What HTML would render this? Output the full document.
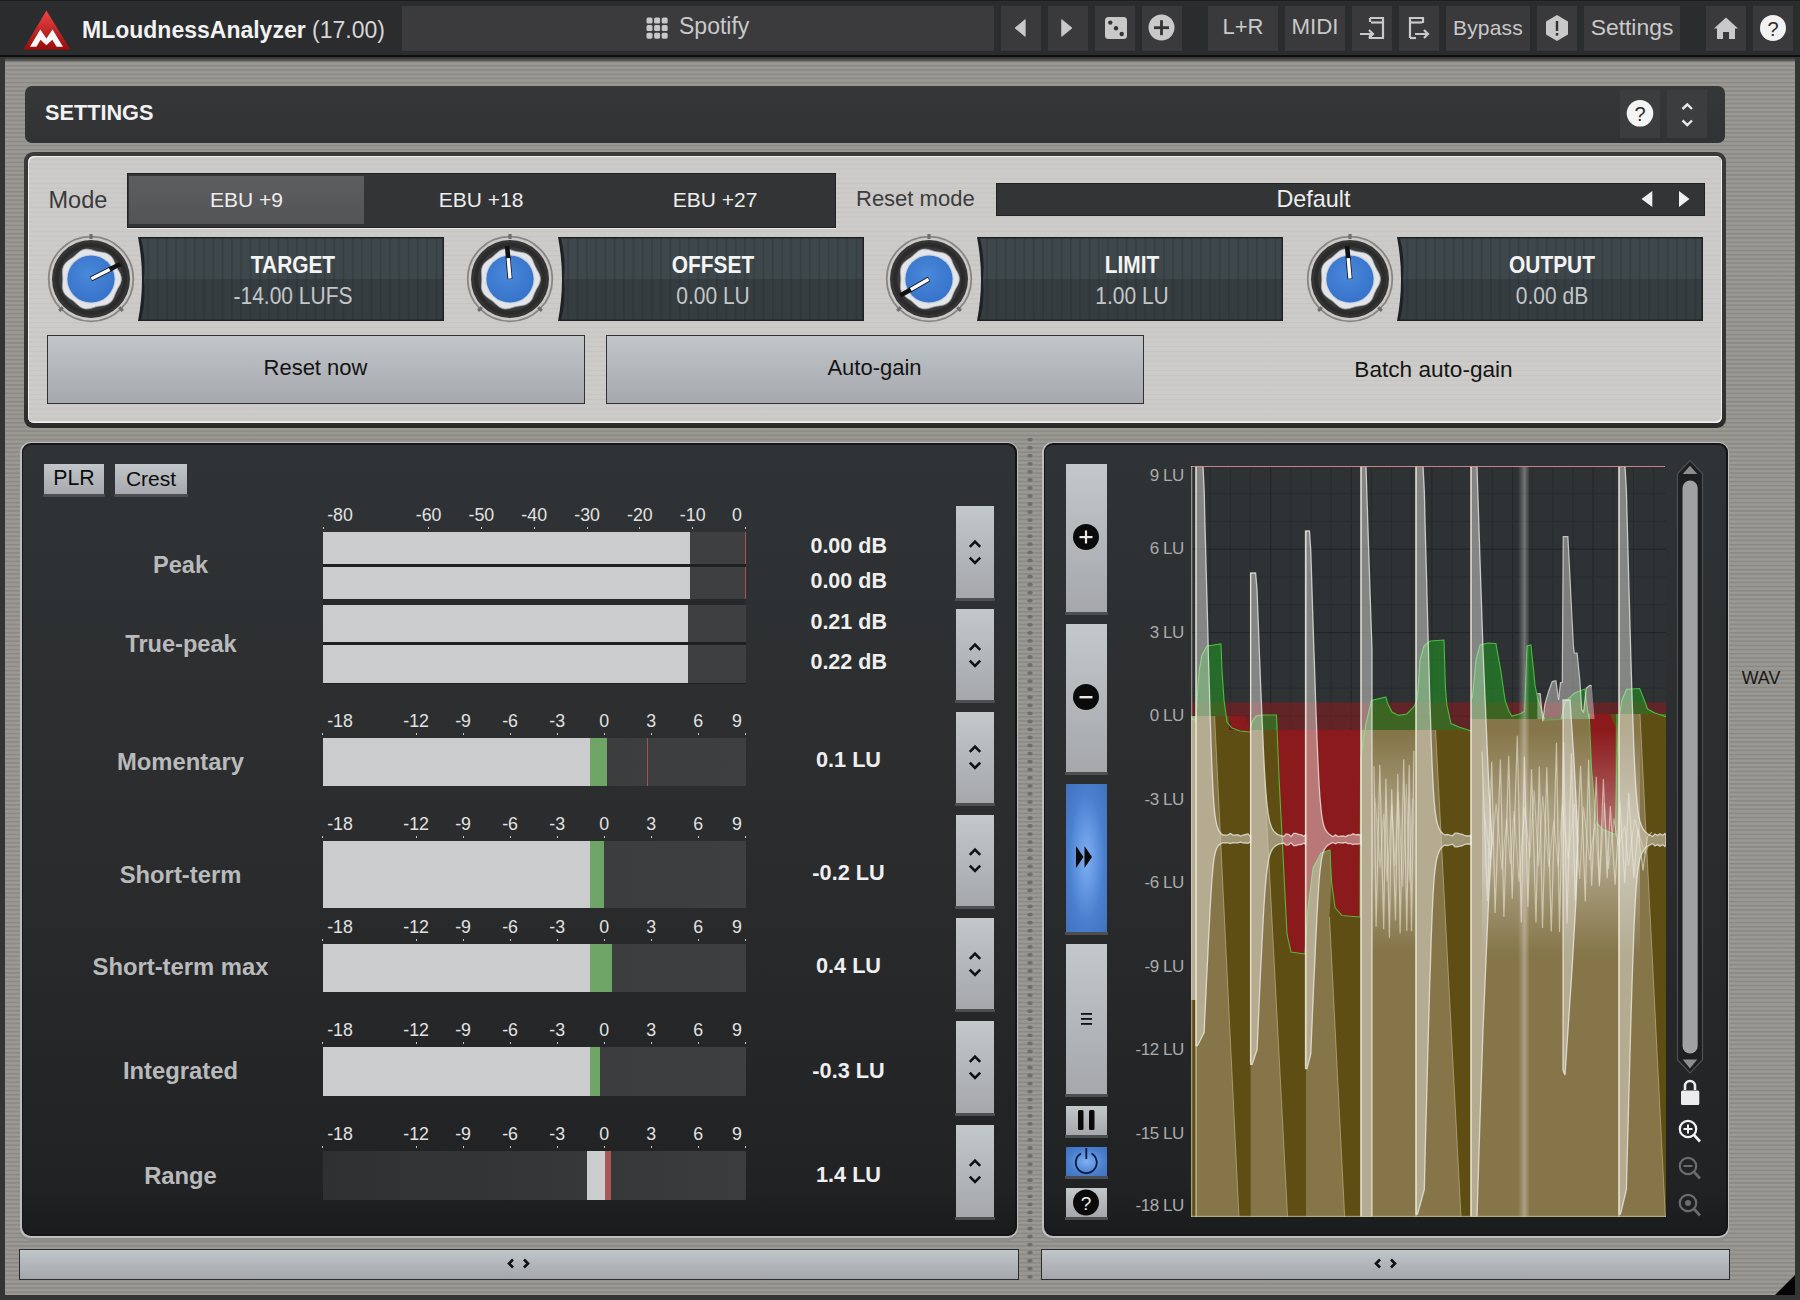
<!DOCTYPE html><html><head><meta charset="utf-8"><style>html,body{margin:0;padding:0;width:1800px;height:1300px;overflow:hidden;}body{position:relative;font-family:"Liberation Sans", sans-serif;background:#939190;}</style></head><body>
<div style="position:absolute;left:0px;top:0px;width:1800px;height:1300px;background:repeating-linear-gradient(180deg,#9b9994 0px,#9a9893 1.6px,#8a8984 2.4px,#8c8b86 3.2px,#9b9994 4.2px);"></div>
<div style="position:absolute;left:0px;top:0px;width:5px;height:1300px;background:#343434;"></div>
<div style="position:absolute;left:1795px;top:0px;width:5px;height:1300px;background:#343434;"></div>
<div style="position:absolute;left:0px;top:1295px;width:1800px;height:5px;background:#343434;"></div>
<div style="position:absolute;left:5px;top:57px;width:1790px;height:5px;background:linear-gradient(#2e2e2e,#5a5957 70%,#8f8d89);"></div>
<div style="position:absolute;left:0px;top:0px;width:1800px;height:57px;background:#2b2c2e;border-top:1px solid #1c1d1d;box-sizing:border-box;"></div>
<div style="position:absolute;left:0px;top:55px;width:1800px;height:2px;background:#0e0f0f;"></div>
<svg style="position:absolute;left:0;top:0" width="80" height="57"><defs><linearGradient id="lg" x1="0" y1="0" x2="0" y2="1"><stop offset="0" stop-color="#ee4444"/><stop offset="1" stop-color="#960d0d"/></linearGradient></defs><polygon points="46.4,10.5 70.5,49.8 23.2,49.8" fill="url(#lg)"/><polygon points="30,46.8 40.3,29.5 46.4,38.6 52.5,29.5 63,46.8 56.6,46.8 52.3,39.8 46.4,45.3 40.5,39.8 36.4,46.8" fill="#fafafa"/></svg>
<div style="position:absolute;left:82.0px;top:17.1px;line-height:27.6px;font-size:23px;font-weight:700;color:#f2f2f2;white-space:nowrap;">MLoudnessAnalyzer</div>
<div style="position:absolute;left:312.0px;top:17.1px;line-height:27.6px;font-size:23px;font-weight:400;color:#d6d6d6;white-space:nowrap;">(17.00)</div>
<div style="position:absolute;left:402px;top:6px;width:592px;height:45px;background:#3b3b3d;"></div>
<svg style="position:absolute;left:646px;top:17px" width="24" height="23"><rect x="0.5" y="0.5" width="6" height="6" rx="1.6" fill="#c9c9c9"/><rect x="0.5" y="8.1" width="6" height="6" rx="1.6" fill="#c9c9c9"/><rect x="0.5" y="15.7" width="6" height="6" rx="1.6" fill="#c9c9c9"/><rect x="8.1" y="0.5" width="6" height="6" rx="1.6" fill="#c9c9c9"/><rect x="8.1" y="8.1" width="6" height="6" rx="1.6" fill="#c9c9c9"/><rect x="8.1" y="15.7" width="6" height="6" rx="1.6" fill="#c9c9c9"/><rect x="15.7" y="0.5" width="6" height="6" rx="1.6" fill="#c9c9c9"/><rect x="15.7" y="8.1" width="6" height="6" rx="1.6" fill="#c9c9c9"/><rect x="15.7" y="15.7" width="6" height="6" rx="1.6" fill="#c9c9c9"/></svg>
<div style="position:absolute;left:679.0px;top:13.4px;line-height:27.6px;font-size:23px;font-weight:400;color:#c9c9c9;white-space:nowrap;">Spotify</div>
<div style="position:absolute;left:1001px;top:6px;width:40px;height:45px;background:#3a3a3c;"></div>
<div style="position:absolute;left:1048px;top:6px;width:40px;height:45px;background:#3a3a3c;"></div>
<div style="position:absolute;left:1095px;top:6px;width:40px;height:45px;background:#3a3a3c;"></div>
<div style="position:absolute;left:1142px;top:6px;width:40px;height:45px;background:#3a3a3c;"></div>
<svg style="position:absolute;left:1001px;top:6px" width="181" height="45"><polygon points="14,22 24.2,13.6 24.2,30.4" fill="#c9c9c9" stroke="#c9c9c9" stroke-width="0.8" stroke-linejoin="round"/><polygon points="60.7,13.6 71,22 60.7,30.4" fill="#c9c9c9" stroke="#c9c9c9" stroke-width="0.8" stroke-linejoin="round"/><rect x="104" y="11" width="22" height="22" rx="3.5" fill="#c9c9c9"/><circle cx="109.3" cy="16.6" r="2.2" fill="#333"/><circle cx="115" cy="22.3" r="2.2" fill="#333"/><circle cx="120.7" cy="28" r="2.2" fill="#333"/><circle cx="160.5" cy="21.5" r="13" fill="#c9c9c9"/><rect x="153" y="20.3" width="15" height="2.8" fill="#333"/><rect x="159.1" y="14.2" width="2.8" height="15" fill="#333"/></svg>
<div style="position:absolute;left:1208px;top:6px;width:70px;height:45px;background:#3a3a3c;"></div>
<div style="position:absolute;left:1208.0px;top:14.2px;width:70px;text-align:center;line-height:26.4px;font-size:22px;font-weight:400;color:#c9c9c9;white-space:nowrap;">L+R</div>
<div style="position:absolute;left:1285px;top:6px;width:60px;height:45px;background:#3a3a3c;"></div>
<div style="position:absolute;left:1285.0px;top:14.0px;width:60px;text-align:center;line-height:26.8px;font-size:22.3px;font-weight:400;color:#c9c9c9;white-space:nowrap;">MIDI</div>
<div style="position:absolute;left:1352px;top:6px;width:40px;height:45px;background:#3a3a3c;"></div>
<div style="position:absolute;left:1399px;top:6px;width:40px;height:45px;background:#3a3a3c;"></div>
<svg style="position:absolute;left:1352px;top:6px" width="87" height="45" fill="none" stroke="#c9c9c9" stroke-width="2.2"><path d="M18,12 H31 V32 H18 V28"/><path d="M18,12 V16"/><path d="M19,16.5 H30"/><path d="M8,28 H21 M17,24 L21,28 L17,32"/><path d="M58,32 V12 H71 V17" transform="translate(0,0)"/><path d="M59,16.5 H70"/><path d="M58,32 H64"/><path d="M63,28 H76 M72,24 L76,28 L72,32"/></svg>
<div style="position:absolute;left:1446px;top:6px;width:84px;height:45px;background:#3a3a3c;"></div>
<div style="position:absolute;left:1446.0px;top:14.8px;width:84px;text-align:center;line-height:25.2px;font-size:21px;font-weight:400;color:#c9c9c9;white-space:nowrap;letter-spacing:0.2px;">Bypass</div>
<div style="position:absolute;left:1537px;top:6px;width:40px;height:45px;background:#3a3a3c;"></div>
<svg style="position:absolute;left:1537px;top:6px" width="40" height="45"><polygon points="20,9 31,15.5 31,28.5 20,35 9,28.5 9,15.5" fill="#c9c9c9"/><rect x="18.8" y="15" width="2.4" height="10" fill="#333"/><rect x="18.8" y="27" width="2.4" height="2.6" fill="#333"/></svg>
<div style="position:absolute;left:1584px;top:6px;width:96px;height:45px;background:#3a3a3c;"></div>
<div style="position:absolute;left:1584.0px;top:13.7px;width:96px;text-align:center;line-height:27.5px;font-size:22.9px;font-weight:400;color:#c9c9c9;white-space:nowrap;">Settings</div>
<div style="position:absolute;left:1706px;top:6px;width:40px;height:45px;background:#3a3a3c;"></div>
<div style="position:absolute;left:1753px;top:6px;width:40px;height:45px;background:#3a3a3c;"></div>
<svg style="position:absolute;left:1706px;top:6px" width="87" height="45"><polygon points="20,11.5 32,22.5 29,22.5 29,33 23,33 23,26 17,26 17,33 11,33 11,22.5 8,22.5" fill="#c9c9c9"/><circle cx="67" cy="22" r="13" fill="#f2f2f2"/><text x="67" y="29.5" text-anchor="middle" font-family="Liberation Sans" font-size="20" fill="#2b2b2b">?</text></svg>
<div style="position:absolute;left:25px;top:86px;width:1700px;height:57px;background:linear-gradient(#353738,#303233);border-radius:7px;"></div>
<div style="position:absolute;left:45.0px;top:100.3px;line-height:26.0px;font-size:21.7px;font-weight:700;color:#f2f2f2;white-space:nowrap;">SETTINGS</div>
<div style="position:absolute;left:1620px;top:90px;width:40px;height:48px;background:#3b3d3e;"></div>
<div style="position:absolute;left:1667px;top:90px;width:40px;height:48px;background:#3b3d3e;"></div>
<svg style="position:absolute;left:1620px;top:90px" width="87" height="48"><circle cx="20" cy="23.3" r="13.3" fill="#f4f4f4"/><text x="20" y="30.5" text-anchor="middle" font-family="Liberation Sans" font-size="20" fill="#2b2b2b">?</text><path d="M62.5,19 L67.3,14.5 L72,19" fill="none" stroke="#e8e8e8" stroke-width="2.4"/><path d="M62.5,30.5 L67.3,35 L72,30.5" fill="none" stroke="#e8e8e8" stroke-width="2.4"/></svg>
<div style="position:absolute;left:24px;top:152px;width:1702px;height:276px;background:linear-gradient(#3a3a3a,#333 90%,#2a2a2a);border-radius:9px;"></div>
<div style="position:absolute;left:28px;top:156px;width:1694px;height:267px;background:repeating-linear-gradient(180deg,#cecccb 0px,#cdcbc8 2.5px,#c6c5c2 3.5px,#cecccb 4.8px);border-radius:6px;box-shadow:inset 1px 1px 0 #f0f0f0,inset -1px -1.5px 0 #f2f2f2;"></div>
<div style="position:absolute;left:48.5px;top:185.9px;line-height:28.2px;font-size:23.5px;font-weight:400;color:#3a3a3a;white-space:nowrap;">Mode</div>
<div style="position:absolute;left:127px;top:173px;width:709px;height:55px;background:#333435;border:1px solid #222;box-sizing:border-box;box-shadow:0 1px 0 #e8e8e8;"></div>
<div style="position:absolute;left:129px;top:176px;width:235px;height:48px;background:linear-gradient(#5d5e5f,#535455);"></div>
<div style="position:absolute;left:146.5px;top:186.8px;width:200px;text-align:center;line-height:25.2px;font-size:21px;font-weight:400;color:#eeeeee;white-space:nowrap;">EBU +9</div>
<div style="position:absolute;left:381.0px;top:186.8px;width:200px;text-align:center;line-height:25.2px;font-size:21px;font-weight:400;color:#eeeeee;white-space:nowrap;">EBU +18</div>
<div style="position:absolute;left:615.0px;top:186.8px;width:200px;text-align:center;line-height:25.2px;font-size:21px;font-weight:400;color:#eeeeee;white-space:nowrap;">EBU +27</div>
<div style="position:absolute;left:856.0px;top:186.2px;line-height:26.4px;font-size:22px;font-weight:400;color:#3c3c3c;white-space:nowrap;">Reset mode</div>
<div style="position:absolute;left:996px;top:183px;width:709px;height:33px;background:#333435;border:1px solid #222;box-sizing:border-box;"></div>
<div style="position:absolute;left:1213.5px;top:185.4px;width:200px;text-align:center;line-height:28.1px;font-size:23.4px;font-weight:400;color:#eeeeee;white-space:nowrap;">Default</div>
<svg style="position:absolute;left:1636px;top:186px" width="60" height="26"><polygon points="5.5,13 16.3,5 16.3,21" fill="#f0f0f0"/><polygon points="43,5 53.5,13 43,21" fill="#f0f0f0"/></svg>
<svg style="position:absolute;left:138px;top:237px" width="306" height="84"><defs><pattern id="vs" width="9.3" height="84" patternUnits="userSpaceOnUse"><rect width="9.3" height="84" fill="#000" fill-opacity="0"/><rect x="0" width="1.6" height="84" fill="#000" fill-opacity="0.12"/></pattern></defs><path d="M0,0 H306 V84 H0 Q8,42 0,0 Z" fill="#1e2225"/><path d="M3,1.5 H304.5 V42 H6 Q8,20 3,1.5 Z" fill="#3e474b"/><path d="M6,42 H304.5 V82.5 H3 Q8,64 6,42 Z" fill="#363d41"/><rect x="3" y="1.5" width="301.5" height="81" fill="url(#vs)"/></svg>
<div style="position:absolute;left:143.0px;top:251.7px;width:300px;text-align:center;line-height:27.8px;font-size:23.2px;font-weight:700;color:#f4f4f4;white-space:nowrap;transform:scaleX(0.9);">TARGET</div>
<div style="position:absolute;left:143.0px;top:282.7px;width:300px;text-align:center;line-height:27.8px;font-size:23.2px;font-weight:400;color:#c3c7c9;white-space:nowrap;transform:scaleX(0.905);">-14.00 LUFS</div>
<svg style="position:absolute;left:44.8px;top:232.5px" width="92" height="92"><defs><radialGradient id="kb" cx="0.45" cy="0.4" r="0.7"><stop offset="0" stop-color="#4a88da"/><stop offset="1" stop-color="#3370c8"/></radialGradient></defs><circle cx="46" cy="46" r="42.3" fill="none" stroke="#878684" stroke-width="1.8"/><line x1="46.0" y1="6.0" x2="46.0" y2="1.0" stroke="#6f6e6c" stroke-width="3.2"/><line x1="74.3" y1="74.3" x2="77.8" y2="77.8" stroke="#6f6e6c" stroke-width="3.2"/><line x1="17.7" y1="74.3" x2="14.2" y2="77.8" stroke="#6f6e6c" stroke-width="3.2"/><circle cx="46" cy="46" r="39" fill="#353536"/><circle cx="46" cy="46" r="36" fill="#2b2b2c"/><circle cx="46" cy="46" r="32" fill="#3a3a3b"/><polygon points="76.4,46.0 76.1,48.6 75.2,51.2 74.0,53.5 72.7,55.7 71.6,57.9 70.5,60.2 69.6,62.5 68.6,65.0 67.3,67.3 65.5,69.3 63.4,70.8 60.9,71.9 58.3,72.5 55.8,72.9 53.3,73.3 50.9,73.8 48.5,74.6 46.0,75.3 43.4,75.8 40.7,75.9 38.1,75.3 35.7,74.2 33.6,72.6 31.6,70.9 29.8,69.2 27.9,67.6 25.8,66.2 23.7,64.7 21.6,63.1 19.8,61.1 18.5,58.8 17.7,56.3 17.4,53.7 17.5,51.0 17.7,48.5 17.8,46.0 17.7,43.5 17.5,41.0 17.4,38.3 17.7,35.7 18.5,33.2 19.8,30.9 21.6,28.9 23.7,27.3 25.8,25.8 27.9,24.4 29.8,22.8 31.6,21.1 33.6,19.4 35.7,17.8 38.1,16.7 40.7,16.1 43.4,16.2 46.0,16.7 48.5,17.4 50.9,18.2 53.3,18.7 55.8,19.1 58.3,19.5 60.9,20.1 63.4,21.2 65.5,22.7 67.3,24.7 68.6,27.0 69.6,29.5 70.5,31.8 71.6,34.1 72.7,36.3 74.0,38.5 75.2,40.8 76.1,43.4" fill="#e4e5e8" stroke="#a6a7ab" stroke-width="0.8"/><circle cx="46" cy="46" r="24.6" fill="#c9d2df"/><circle cx="46" cy="46" r="23.6" fill="url(#kb)"/><line x1="46" y1="46" x2="65.6" y2="36.0" stroke="#141414" stroke-width="5"/><line x1="63.8" y1="36.9" x2="75.4" y2="31.0" stroke="#111" stroke-width="4.6"/><line x1="46.4" y1="45.8" x2="64.7" y2="36.5" stroke="#fafafa" stroke-width="3.4"/></svg>
<svg style="position:absolute;left:557.5px;top:237px" width="306" height="84"><defs><pattern id="vs" width="9.3" height="84" patternUnits="userSpaceOnUse"><rect width="9.3" height="84" fill="#000" fill-opacity="0"/><rect x="0" width="1.6" height="84" fill="#000" fill-opacity="0.12"/></pattern></defs><path d="M0,0 H306 V84 H0 Q8,42 0,0 Z" fill="#1e2225"/><path d="M3,1.5 H304.5 V42 H6 Q8,20 3,1.5 Z" fill="#3e474b"/><path d="M6,42 H304.5 V82.5 H3 Q8,64 6,42 Z" fill="#363d41"/><rect x="3" y="1.5" width="301.5" height="81" fill="url(#vs)"/></svg>
<div style="position:absolute;left:562.5px;top:251.7px;width:300px;text-align:center;line-height:27.8px;font-size:23.2px;font-weight:700;color:#f4f4f4;white-space:nowrap;transform:scaleX(0.9);">OFFSET</div>
<div style="position:absolute;left:562.5px;top:282.7px;width:300px;text-align:center;line-height:27.8px;font-size:23.2px;font-weight:400;color:#c3c7c9;white-space:nowrap;transform:scaleX(0.905);">0.00 LU</div>
<svg style="position:absolute;left:464.0px;top:232.5px" width="92" height="92"><defs><radialGradient id="kb" cx="0.45" cy="0.4" r="0.7"><stop offset="0" stop-color="#4a88da"/><stop offset="1" stop-color="#3370c8"/></radialGradient></defs><circle cx="46" cy="46" r="42.3" fill="none" stroke="#878684" stroke-width="1.8"/><line x1="46.0" y1="6.0" x2="46.0" y2="1.0" stroke="#6f6e6c" stroke-width="3.2"/><line x1="74.3" y1="74.3" x2="77.8" y2="77.8" stroke="#6f6e6c" stroke-width="3.2"/><line x1="17.7" y1="74.3" x2="14.2" y2="77.8" stroke="#6f6e6c" stroke-width="3.2"/><circle cx="46" cy="46" r="39" fill="#353536"/><circle cx="46" cy="46" r="36" fill="#2b2b2c"/><circle cx="46" cy="46" r="32" fill="#3a3a3b"/><polygon points="76.4,46.0 76.1,48.6 75.2,51.2 74.0,53.5 72.7,55.7 71.6,57.9 70.5,60.2 69.6,62.5 68.6,65.0 67.3,67.3 65.5,69.3 63.4,70.8 60.9,71.9 58.3,72.5 55.8,72.9 53.3,73.3 50.9,73.8 48.5,74.6 46.0,75.3 43.4,75.8 40.7,75.9 38.1,75.3 35.7,74.2 33.6,72.6 31.6,70.9 29.8,69.2 27.9,67.6 25.8,66.2 23.7,64.7 21.6,63.1 19.8,61.1 18.5,58.8 17.7,56.3 17.4,53.7 17.5,51.0 17.7,48.5 17.8,46.0 17.7,43.5 17.5,41.0 17.4,38.3 17.7,35.7 18.5,33.2 19.8,30.9 21.6,28.9 23.7,27.3 25.8,25.8 27.9,24.4 29.8,22.8 31.6,21.1 33.6,19.4 35.7,17.8 38.1,16.7 40.7,16.1 43.4,16.2 46.0,16.7 48.5,17.4 50.9,18.2 53.3,18.7 55.8,19.1 58.3,19.5 60.9,20.1 63.4,21.2 65.5,22.7 67.3,24.7 68.6,27.0 69.6,29.5 70.5,31.8 71.6,34.1 72.7,36.3 74.0,38.5 75.2,40.8 76.1,43.4" fill="#e4e5e8" stroke="#a6a7ab" stroke-width="0.8"/><circle cx="46" cy="46" r="24.6" fill="#c9d2df"/><circle cx="46" cy="46" r="23.6" fill="url(#kb)"/><line x1="46" y1="46" x2="44.1" y2="24.1" stroke="#141414" stroke-width="5"/><line x1="44.3" y1="26.1" x2="43.1" y2="13.1" stroke="#111" stroke-width="4.6"/><line x1="46.0" y1="45.5" x2="44.2" y2="25.1" stroke="#fafafa" stroke-width="3.4"/></svg>
<svg style="position:absolute;left:977px;top:237px" width="306" height="84"><defs><pattern id="vs" width="9.3" height="84" patternUnits="userSpaceOnUse"><rect width="9.3" height="84" fill="#000" fill-opacity="0"/><rect x="0" width="1.6" height="84" fill="#000" fill-opacity="0.12"/></pattern></defs><path d="M0,0 H306 V84 H0 Q8,42 0,0 Z" fill="#1e2225"/><path d="M3,1.5 H304.5 V42 H6 Q8,20 3,1.5 Z" fill="#3e474b"/><path d="M6,42 H304.5 V82.5 H3 Q8,64 6,42 Z" fill="#363d41"/><rect x="3" y="1.5" width="301.5" height="81" fill="url(#vs)"/></svg>
<div style="position:absolute;left:982.0px;top:251.7px;width:300px;text-align:center;line-height:27.8px;font-size:23.2px;font-weight:700;color:#f4f4f4;white-space:nowrap;transform:scaleX(0.9);">LIMIT</div>
<div style="position:absolute;left:982.0px;top:282.7px;width:300px;text-align:center;line-height:27.8px;font-size:23.2px;font-weight:400;color:#c3c7c9;white-space:nowrap;transform:scaleX(0.905);">1.00 LU</div>
<svg style="position:absolute;left:883.2px;top:232.5px" width="92" height="92"><defs><radialGradient id="kb" cx="0.45" cy="0.4" r="0.7"><stop offset="0" stop-color="#4a88da"/><stop offset="1" stop-color="#3370c8"/></radialGradient></defs><circle cx="46" cy="46" r="42.3" fill="none" stroke="#878684" stroke-width="1.8"/><line x1="46.0" y1="6.0" x2="46.0" y2="1.0" stroke="#6f6e6c" stroke-width="3.2"/><line x1="74.3" y1="74.3" x2="77.8" y2="77.8" stroke="#6f6e6c" stroke-width="3.2"/><line x1="17.7" y1="74.3" x2="14.2" y2="77.8" stroke="#6f6e6c" stroke-width="3.2"/><circle cx="46" cy="46" r="39" fill="#353536"/><circle cx="46" cy="46" r="36" fill="#2b2b2c"/><circle cx="46" cy="46" r="32" fill="#3a3a3b"/><polygon points="76.4,46.0 76.1,48.6 75.2,51.2 74.0,53.5 72.7,55.7 71.6,57.9 70.5,60.2 69.6,62.5 68.6,65.0 67.3,67.3 65.5,69.3 63.4,70.8 60.9,71.9 58.3,72.5 55.8,72.9 53.3,73.3 50.9,73.8 48.5,74.6 46.0,75.3 43.4,75.8 40.7,75.9 38.1,75.3 35.7,74.2 33.6,72.6 31.6,70.9 29.8,69.2 27.9,67.6 25.8,66.2 23.7,64.7 21.6,63.1 19.8,61.1 18.5,58.8 17.7,56.3 17.4,53.7 17.5,51.0 17.7,48.5 17.8,46.0 17.7,43.5 17.5,41.0 17.4,38.3 17.7,35.7 18.5,33.2 19.8,30.9 21.6,28.9 23.7,27.3 25.8,25.8 27.9,24.4 29.8,22.8 31.6,21.1 33.6,19.4 35.7,17.8 38.1,16.7 40.7,16.1 43.4,16.2 46.0,16.7 48.5,17.4 50.9,18.2 53.3,18.7 55.8,19.1 58.3,19.5 60.9,20.1 63.4,21.2 65.5,22.7 67.3,24.7 68.6,27.0 69.6,29.5 70.5,31.8 71.6,34.1 72.7,36.3 74.0,38.5 75.2,40.8 76.1,43.4" fill="#e4e5e8" stroke="#a6a7ab" stroke-width="0.8"/><circle cx="46" cy="46" r="24.6" fill="#c9d2df"/><circle cx="46" cy="46" r="23.6" fill="url(#kb)"/><line x1="46" y1="46" x2="26.9" y2="57.0" stroke="#141414" stroke-width="5"/><line x1="28.7" y1="56.0" x2="17.4" y2="62.5" stroke="#111" stroke-width="4.6"/><line x1="45.6" y1="46.2" x2="27.8" y2="56.5" stroke="#fafafa" stroke-width="3.4"/></svg>
<svg style="position:absolute;left:1397px;top:237px" width="306" height="84"><defs><pattern id="vs" width="9.3" height="84" patternUnits="userSpaceOnUse"><rect width="9.3" height="84" fill="#000" fill-opacity="0"/><rect x="0" width="1.6" height="84" fill="#000" fill-opacity="0.12"/></pattern></defs><path d="M0,0 H306 V84 H0 Q8,42 0,0 Z" fill="#1e2225"/><path d="M3,1.5 H304.5 V42 H6 Q8,20 3,1.5 Z" fill="#3e474b"/><path d="M6,42 H304.5 V82.5 H3 Q8,64 6,42 Z" fill="#363d41"/><rect x="3" y="1.5" width="301.5" height="81" fill="url(#vs)"/></svg>
<div style="position:absolute;left:1402.0px;top:251.7px;width:300px;text-align:center;line-height:27.8px;font-size:23.2px;font-weight:700;color:#f4f4f4;white-space:nowrap;transform:scaleX(0.9);">OUTPUT</div>
<div style="position:absolute;left:1402.0px;top:282.7px;width:300px;text-align:center;line-height:27.8px;font-size:23.2px;font-weight:400;color:#c3c7c9;white-space:nowrap;transform:scaleX(0.905);">0.00 dB</div>
<svg style="position:absolute;left:1303.7px;top:232.5px" width="92" height="92"><defs><radialGradient id="kb" cx="0.45" cy="0.4" r="0.7"><stop offset="0" stop-color="#4a88da"/><stop offset="1" stop-color="#3370c8"/></radialGradient></defs><circle cx="46" cy="46" r="42.3" fill="none" stroke="#878684" stroke-width="1.8"/><line x1="46.0" y1="6.0" x2="46.0" y2="1.0" stroke="#6f6e6c" stroke-width="3.2"/><line x1="74.3" y1="74.3" x2="77.8" y2="77.8" stroke="#6f6e6c" stroke-width="3.2"/><line x1="17.7" y1="74.3" x2="14.2" y2="77.8" stroke="#6f6e6c" stroke-width="3.2"/><circle cx="46" cy="46" r="39" fill="#353536"/><circle cx="46" cy="46" r="36" fill="#2b2b2c"/><circle cx="46" cy="46" r="32" fill="#3a3a3b"/><polygon points="76.4,46.0 76.1,48.6 75.2,51.2 74.0,53.5 72.7,55.7 71.6,57.9 70.5,60.2 69.6,62.5 68.6,65.0 67.3,67.3 65.5,69.3 63.4,70.8 60.9,71.9 58.3,72.5 55.8,72.9 53.3,73.3 50.9,73.8 48.5,74.6 46.0,75.3 43.4,75.8 40.7,75.9 38.1,75.3 35.7,74.2 33.6,72.6 31.6,70.9 29.8,69.2 27.9,67.6 25.8,66.2 23.7,64.7 21.6,63.1 19.8,61.1 18.5,58.8 17.7,56.3 17.4,53.7 17.5,51.0 17.7,48.5 17.8,46.0 17.7,43.5 17.5,41.0 17.4,38.3 17.7,35.7 18.5,33.2 19.8,30.9 21.6,28.9 23.7,27.3 25.8,25.8 27.9,24.4 29.8,22.8 31.6,21.1 33.6,19.4 35.7,17.8 38.1,16.7 40.7,16.1 43.4,16.2 46.0,16.7 48.5,17.4 50.9,18.2 53.3,18.7 55.8,19.1 58.3,19.5 60.9,20.1 63.4,21.2 65.5,22.7 67.3,24.7 68.6,27.0 69.6,29.5 70.5,31.8 71.6,34.1 72.7,36.3 74.0,38.5 75.2,40.8 76.1,43.4" fill="#e4e5e8" stroke="#a6a7ab" stroke-width="0.8"/><circle cx="46" cy="46" r="24.6" fill="#c9d2df"/><circle cx="46" cy="46" r="23.6" fill="url(#kb)"/><line x1="46" y1="46" x2="44.1" y2="24.1" stroke="#141414" stroke-width="5"/><line x1="44.3" y1="26.1" x2="43.1" y2="13.1" stroke="#111" stroke-width="4.6"/><line x1="46.0" y1="45.5" x2="44.2" y2="25.1" stroke="#fafafa" stroke-width="3.4"/></svg>
<div style="position:absolute;left:47px;top:335px;width:538px;height:69px;background:linear-gradient(#c0c6c9,#a6a8ad);border:1px solid #2f3133;box-sizing:border-box;"></div>
<div style="position:absolute;left:115.5px;top:355.2px;width:400px;text-align:center;line-height:26.4px;font-size:22px;font-weight:400;color:#141414;white-space:nowrap;">Reset now</div>
<div style="position:absolute;left:606px;top:335px;width:538px;height:69px;background:linear-gradient(#c0c6c9,#a6a8ad);border:1px solid #2f3133;box-sizing:border-box;"></div>
<div style="position:absolute;left:674.5px;top:355.2px;width:400px;text-align:center;line-height:26.4px;font-size:22px;font-weight:400;color:#141414;white-space:nowrap;">Auto-gain</div>
<div style="position:absolute;left:1233.5px;top:356.3px;width:400px;text-align:center;line-height:27.1px;font-size:22.6px;font-weight:400;color:#141414;white-space:nowrap;">Batch auto-gain</div>
<div style="position:absolute;left:20px;top:441.5px;width:998px;height:799px;background:linear-gradient(#888 0,#888 100%);border-radius:10px;opacity:0.6;"></div>
<div style="position:absolute;left:20px;top:441.5px;width:998px;height:796.5px;background:#bdbdbd;border-radius:10px;"></div>
<div style="position:absolute;left:21.5px;top:443px;width:995px;height:793px;background:#141516;border-radius:9px;"></div>
<div style="position:absolute;left:23px;top:444.5px;width:992px;height:789.5px;background:linear-gradient(#303335,#2a2c2e 50%,#212224 94%,#1a1b1d);border-radius:8px;"></div>
<div style="position:absolute;left:43px;top:494px;width:62px;height:3px;background:#4c4f51;border-radius:1px;"></div>
<div style="position:absolute;left:44px;top:464px;width:60px;height:30px;background:linear-gradient(#c0c6c9,#a6a8ad);border:1px solid #2f3133;box-sizing:border-box;border:none;"></div>
<div style="position:absolute;left:44.0px;top:465.6px;width:60px;text-align:center;line-height:25.6px;font-size:21.3px;font-weight:400;color:#0c0c0c;white-space:nowrap;">PLR</div>
<div style="position:absolute;left:114px;top:494px;width:74px;height:3px;background:#4c4f51;border-radius:1px;"></div>
<div style="position:absolute;left:115px;top:464px;width:72px;height:30px;background:linear-gradient(#c0c6c9,#a6a8ad);border:1px solid #2f3133;box-sizing:border-box;border:none;"></div>
<div style="position:absolute;left:115.0px;top:465.8px;width:72px;text-align:center;line-height:25.2px;font-size:21px;font-weight:400;color:#0c0c0c;white-space:nowrap;">Crest</div>
<div style="position:absolute;left:310.0px;top:504.9px;width:60px;text-align:center;line-height:21.4px;font-size:17.8px;font-weight:400;color:#e2e2e2;white-space:nowrap;">-80</div>
<div style="position:absolute;left:398.6px;top:504.9px;width:60px;text-align:center;line-height:21.4px;font-size:17.8px;font-weight:400;color:#e2e2e2;white-space:nowrap;">-60</div>
<div style="position:absolute;left:451.4px;top:504.9px;width:60px;text-align:center;line-height:21.4px;font-size:17.8px;font-weight:400;color:#e2e2e2;white-space:nowrap;">-50</div>
<div style="position:absolute;left:504.2px;top:504.9px;width:60px;text-align:center;line-height:21.4px;font-size:17.8px;font-weight:400;color:#e2e2e2;white-space:nowrap;">-40</div>
<div style="position:absolute;left:557.1px;top:504.9px;width:60px;text-align:center;line-height:21.4px;font-size:17.8px;font-weight:400;color:#e2e2e2;white-space:nowrap;">-30</div>
<div style="position:absolute;left:609.9px;top:504.9px;width:60px;text-align:center;line-height:21.4px;font-size:17.8px;font-weight:400;color:#e2e2e2;white-space:nowrap;">-20</div>
<div style="position:absolute;left:662.7px;top:504.9px;width:60px;text-align:center;line-height:21.4px;font-size:17.8px;font-weight:400;color:#e2e2e2;white-space:nowrap;">-10</div>
<div style="position:absolute;left:707.0px;top:504.9px;width:60px;text-align:center;line-height:21.4px;font-size:17.8px;font-weight:400;color:#e2e2e2;white-space:nowrap;">0</div>
<div style="position:absolute;left:322.5px;top:526.5px;width:1px;height:2px;background:#c8c8c8;"></div>
<div style="position:absolute;left:428.125px;top:526.5px;width:1px;height:2px;background:#c8c8c8;"></div>
<div style="position:absolute;left:480.9375px;top:526.5px;width:1px;height:2px;background:#c8c8c8;"></div>
<div style="position:absolute;left:533.75px;top:526.5px;width:1px;height:2px;background:#c8c8c8;"></div>
<div style="position:absolute;left:586.5625px;top:526.5px;width:1px;height:2px;background:#c8c8c8;"></div>
<div style="position:absolute;left:639.375px;top:526.5px;width:1px;height:2px;background:#c8c8c8;"></div>
<div style="position:absolute;left:692.1875px;top:526.5px;width:1px;height:2px;background:#c8c8c8;"></div>
<div style="position:absolute;left:745.0px;top:526.5px;width:1px;height:2px;background:#c8c8c8;"></div>
<div style="position:absolute;left:323px;top:531.5px;width:422.5px;height:68px;background:#1e2123;"></div>
<div style="position:absolute;left:323px;top:599px;width:422.5px;height:6px;background:#26292b;"></div>
<div style="position:absolute;left:323px;top:604.5px;width:422.5px;height:79px;background:#1e2123;"></div>
<div style="position:absolute;left:323px;top:532px;width:422.5px;height:32px;background:#3d3f41;"></div>
<div style="position:absolute;left:323px;top:532px;width:367px;height:32px;background:#cbcccd;"></div>
<div style="position:absolute;left:744.5px;top:532px;width:1.2px;height:32px;background:#b05050;"></div>
<div style="position:absolute;left:323px;top:567px;width:422.5px;height:32px;background:#3d3f41;"></div>
<div style="position:absolute;left:323px;top:567px;width:367px;height:32px;background:#cbcccd;"></div>
<div style="position:absolute;left:744.5px;top:567px;width:1.2px;height:32px;background:#b05050;"></div>
<div style="position:absolute;left:323px;top:605px;width:422.5px;height:36.5px;background:#3d3f41;"></div>
<div style="position:absolute;left:323px;top:605px;width:365px;height:36.5px;background:#cbcccd;"></div>
<div style="position:absolute;left:323px;top:645px;width:422.5px;height:38px;background:#3d3f41;"></div>
<div style="position:absolute;left:323px;top:645px;width:365px;height:38px;background:#cbcccd;"></div>
<div style="position:absolute;left:55.5px;top:551.3px;width:250px;text-align:center;line-height:28.3px;font-size:23.6px;font-weight:700;color:#b9babb;white-space:nowrap;">Peak</div>
<div style="position:absolute;left:56.0px;top:629.5px;width:250px;text-align:center;line-height:28.3px;font-size:23.6px;font-weight:700;color:#b9babb;white-space:nowrap;">True-peak</div>
<div style="position:absolute;left:748.7px;top:533.9px;width:200px;text-align:center;line-height:25.8px;font-size:21.5px;font-weight:700;color:#efefef;white-space:nowrap;">0.00 dB</div>
<div style="position:absolute;left:748.7px;top:568.7px;width:200px;text-align:center;line-height:25.8px;font-size:21.5px;font-weight:700;color:#efefef;white-space:nowrap;">0.00 dB</div>
<div style="position:absolute;left:748.7px;top:609.7px;width:200px;text-align:center;line-height:25.8px;font-size:21.5px;font-weight:700;color:#efefef;white-space:nowrap;">0.21 dB</div>
<div style="position:absolute;left:748.7px;top:649.7px;width:200px;text-align:center;line-height:25.8px;font-size:21.5px;font-weight:700;color:#efefef;white-space:nowrap;">0.22 dB</div>
<div style="position:absolute;left:955px;top:597.5px;width:40px;height:3px;background:#4c4f51;"></div>
<div style="position:absolute;left:956px;top:506px;width:38px;height:91.5px;background:linear-gradient(#c3c8cb,#a5a7ab);"></div>
<svg style="position:absolute;left:956px;top:531.8px" width="38" height="40" fill="none" stroke="#111" stroke-width="2.6"><path d="M13.8,14.8 L19,9.6 L24.2,14.8"/><path d="M13.8,25.6 L19,30.8 L24.2,25.6"/></svg>
<div style="position:absolute;left:955px;top:700px;width:40px;height:3px;background:#4c4f51;"></div>
<div style="position:absolute;left:956px;top:609px;width:38px;height:91px;background:linear-gradient(#c3c8cb,#a5a7ab);"></div>
<svg style="position:absolute;left:956px;top:634.5px" width="38" height="40" fill="none" stroke="#111" stroke-width="2.6"><path d="M13.8,14.8 L19,9.6 L24.2,14.8"/><path d="M13.8,25.6 L19,30.8 L24.2,25.6"/></svg>
<div style="position:absolute;left:310.0px;top:711.4px;width:60px;text-align:center;line-height:21.4px;font-size:17.8px;font-weight:400;color:#e2e2e2;white-space:nowrap;">-18</div>
<div style="position:absolute;left:386.1px;top:711.4px;width:60px;text-align:center;line-height:21.4px;font-size:17.8px;font-weight:400;color:#e2e2e2;white-space:nowrap;">-12</div>
<div style="position:absolute;left:433.1px;top:711.4px;width:60px;text-align:center;line-height:21.4px;font-size:17.8px;font-weight:400;color:#e2e2e2;white-space:nowrap;">-9</div>
<div style="position:absolute;left:480.1px;top:711.4px;width:60px;text-align:center;line-height:21.4px;font-size:17.8px;font-weight:400;color:#e2e2e2;white-space:nowrap;">-6</div>
<div style="position:absolute;left:527.2px;top:711.4px;width:60px;text-align:center;line-height:21.4px;font-size:17.8px;font-weight:400;color:#e2e2e2;white-space:nowrap;">-3</div>
<div style="position:absolute;left:574.2px;top:711.4px;width:60px;text-align:center;line-height:21.4px;font-size:17.8px;font-weight:400;color:#e2e2e2;white-space:nowrap;">0</div>
<div style="position:absolute;left:621.2px;top:711.4px;width:60px;text-align:center;line-height:21.4px;font-size:17.8px;font-weight:400;color:#e2e2e2;white-space:nowrap;">3</div>
<div style="position:absolute;left:668.3px;top:711.4px;width:60px;text-align:center;line-height:21.4px;font-size:17.8px;font-weight:400;color:#e2e2e2;white-space:nowrap;">6</div>
<div style="position:absolute;left:707.0px;top:711.4px;width:60px;text-align:center;line-height:21.4px;font-size:17.8px;font-weight:400;color:#e2e2e2;white-space:nowrap;">9</div>
<div style="position:absolute;left:321.50000000000006px;top:733.2px;width:1px;height:2px;background:#c8c8c8;"></div>
<div style="position:absolute;left:415.5666666666667px;top:733.2px;width:1px;height:2px;background:#c8c8c8;"></div>
<div style="position:absolute;left:462.6px;top:733.2px;width:1px;height:2px;background:#c8c8c8;"></div>
<div style="position:absolute;left:509.6333333333334px;top:733.2px;width:1px;height:2px;background:#c8c8c8;"></div>
<div style="position:absolute;left:556.6666666666667px;top:733.2px;width:1px;height:2px;background:#c8c8c8;"></div>
<div style="position:absolute;left:603.7px;top:733.2px;width:1px;height:2px;background:#c8c8c8;"></div>
<div style="position:absolute;left:650.7333333333333px;top:733.2px;width:1px;height:2px;background:#c8c8c8;"></div>
<div style="position:absolute;left:697.7666666666667px;top:733.2px;width:1px;height:2px;background:#c8c8c8;"></div>
<div style="position:absolute;left:744.8000000000001px;top:733.2px;width:1px;height:2px;background:#c8c8c8;"></div>
<div style="position:absolute;left:323px;top:738.2px;width:422.5px;height:47.799999999999955px;background:linear-gradient(90deg,#38393b,#3d3f41);"></div>
<div style="position:absolute;left:323px;top:738.2px;width:266.5px;height:47.799999999999955px;background:#cbcccd;"></div>
<div style="position:absolute;left:589.5px;top:738.2px;width:17.5px;height:47.799999999999955px;background:#6ea465;"></div>
<div style="position:absolute;left:646.8px;top:738.2px;width:1.2px;height:47.799999999999955px;background:#a85050;"></div>
<div style="position:absolute;left:55.5px;top:747.9px;width:250px;text-align:center;line-height:28.6px;font-size:23.8px;font-weight:700;color:#b9babb;white-space:nowrap;">Momentary</div>
<div style="position:absolute;left:748.5px;top:747.4px;width:200px;text-align:center;line-height:26.0px;font-size:21.7px;font-weight:700;color:#efefef;white-space:nowrap;">0.1 LU</div>
<div style="position:absolute;left:955px;top:802.5px;width:40px;height:3px;background:#4c4f51;"></div>
<div style="position:absolute;left:956px;top:712px;width:38px;height:90.5px;background:linear-gradient(#c3c8cb,#a5a7ab);"></div>
<svg style="position:absolute;left:956px;top:737.2px" width="38" height="40" fill="none" stroke="#111" stroke-width="2.6"><path d="M13.8,14.8 L19,9.6 L24.2,14.8"/><path d="M13.8,25.6 L19,30.8 L24.2,25.6"/></svg>
<div style="position:absolute;left:310.0px;top:813.9px;width:60px;text-align:center;line-height:21.4px;font-size:17.8px;font-weight:400;color:#e2e2e2;white-space:nowrap;">-18</div>
<div style="position:absolute;left:386.1px;top:813.9px;width:60px;text-align:center;line-height:21.4px;font-size:17.8px;font-weight:400;color:#e2e2e2;white-space:nowrap;">-12</div>
<div style="position:absolute;left:433.1px;top:813.9px;width:60px;text-align:center;line-height:21.4px;font-size:17.8px;font-weight:400;color:#e2e2e2;white-space:nowrap;">-9</div>
<div style="position:absolute;left:480.1px;top:813.9px;width:60px;text-align:center;line-height:21.4px;font-size:17.8px;font-weight:400;color:#e2e2e2;white-space:nowrap;">-6</div>
<div style="position:absolute;left:527.2px;top:813.9px;width:60px;text-align:center;line-height:21.4px;font-size:17.8px;font-weight:400;color:#e2e2e2;white-space:nowrap;">-3</div>
<div style="position:absolute;left:574.2px;top:813.9px;width:60px;text-align:center;line-height:21.4px;font-size:17.8px;font-weight:400;color:#e2e2e2;white-space:nowrap;">0</div>
<div style="position:absolute;left:621.2px;top:813.9px;width:60px;text-align:center;line-height:21.4px;font-size:17.8px;font-weight:400;color:#e2e2e2;white-space:nowrap;">3</div>
<div style="position:absolute;left:668.3px;top:813.9px;width:60px;text-align:center;line-height:21.4px;font-size:17.8px;font-weight:400;color:#e2e2e2;white-space:nowrap;">6</div>
<div style="position:absolute;left:707.0px;top:813.9px;width:60px;text-align:center;line-height:21.4px;font-size:17.8px;font-weight:400;color:#e2e2e2;white-space:nowrap;">9</div>
<div style="position:absolute;left:321.50000000000006px;top:836.2px;width:1px;height:2px;background:#c8c8c8;"></div>
<div style="position:absolute;left:415.5666666666667px;top:836.2px;width:1px;height:2px;background:#c8c8c8;"></div>
<div style="position:absolute;left:462.6px;top:836.2px;width:1px;height:2px;background:#c8c8c8;"></div>
<div style="position:absolute;left:509.6333333333334px;top:836.2px;width:1px;height:2px;background:#c8c8c8;"></div>
<div style="position:absolute;left:556.6666666666667px;top:836.2px;width:1px;height:2px;background:#c8c8c8;"></div>
<div style="position:absolute;left:603.7px;top:836.2px;width:1px;height:2px;background:#c8c8c8;"></div>
<div style="position:absolute;left:650.7333333333333px;top:836.2px;width:1px;height:2px;background:#c8c8c8;"></div>
<div style="position:absolute;left:697.7666666666667px;top:836.2px;width:1px;height:2px;background:#c8c8c8;"></div>
<div style="position:absolute;left:744.8000000000001px;top:836.2px;width:1px;height:2px;background:#c8c8c8;"></div>
<div style="position:absolute;left:323px;top:841.2px;width:422.5px;height:66.79999999999995px;background:linear-gradient(90deg,#38393b,#3d3f41);"></div>
<div style="position:absolute;left:323px;top:841.2px;width:266.5px;height:66.79999999999995px;background:#cbcccd;"></div>
<div style="position:absolute;left:589.5px;top:841.2px;width:14.5px;height:66.79999999999995px;background:#6ea465;"></div>
<div style="position:absolute;left:55.5px;top:860.7px;width:250px;text-align:center;line-height:28.6px;font-size:23.8px;font-weight:700;color:#b9babb;white-space:nowrap;">Short-term</div>
<div style="position:absolute;left:748.5px;top:860.4px;width:200px;text-align:center;line-height:26.0px;font-size:21.7px;font-weight:700;color:#efefef;white-space:nowrap;">-0.2 LU</div>
<div style="position:absolute;left:955px;top:905.5px;width:40px;height:3px;background:#4c4f51;"></div>
<div style="position:absolute;left:956px;top:815px;width:38px;height:90.5px;background:linear-gradient(#c3c8cb,#a5a7ab);"></div>
<svg style="position:absolute;left:956px;top:840.2px" width="38" height="40" fill="none" stroke="#111" stroke-width="2.6"><path d="M13.8,14.8 L19,9.6 L24.2,14.8"/><path d="M13.8,25.6 L19,30.8 L24.2,25.6"/></svg>
<div style="position:absolute;left:310.0px;top:916.9px;width:60px;text-align:center;line-height:21.4px;font-size:17.8px;font-weight:400;color:#e2e2e2;white-space:nowrap;">-18</div>
<div style="position:absolute;left:386.1px;top:916.9px;width:60px;text-align:center;line-height:21.4px;font-size:17.8px;font-weight:400;color:#e2e2e2;white-space:nowrap;">-12</div>
<div style="position:absolute;left:433.1px;top:916.9px;width:60px;text-align:center;line-height:21.4px;font-size:17.8px;font-weight:400;color:#e2e2e2;white-space:nowrap;">-9</div>
<div style="position:absolute;left:480.1px;top:916.9px;width:60px;text-align:center;line-height:21.4px;font-size:17.8px;font-weight:400;color:#e2e2e2;white-space:nowrap;">-6</div>
<div style="position:absolute;left:527.2px;top:916.9px;width:60px;text-align:center;line-height:21.4px;font-size:17.8px;font-weight:400;color:#e2e2e2;white-space:nowrap;">-3</div>
<div style="position:absolute;left:574.2px;top:916.9px;width:60px;text-align:center;line-height:21.4px;font-size:17.8px;font-weight:400;color:#e2e2e2;white-space:nowrap;">0</div>
<div style="position:absolute;left:621.2px;top:916.9px;width:60px;text-align:center;line-height:21.4px;font-size:17.8px;font-weight:400;color:#e2e2e2;white-space:nowrap;">3</div>
<div style="position:absolute;left:668.3px;top:916.9px;width:60px;text-align:center;line-height:21.4px;font-size:17.8px;font-weight:400;color:#e2e2e2;white-space:nowrap;">6</div>
<div style="position:absolute;left:707.0px;top:916.9px;width:60px;text-align:center;line-height:21.4px;font-size:17.8px;font-weight:400;color:#e2e2e2;white-space:nowrap;">9</div>
<div style="position:absolute;left:321.50000000000006px;top:939px;width:1px;height:2px;background:#c8c8c8;"></div>
<div style="position:absolute;left:415.5666666666667px;top:939px;width:1px;height:2px;background:#c8c8c8;"></div>
<div style="position:absolute;left:462.6px;top:939px;width:1px;height:2px;background:#c8c8c8;"></div>
<div style="position:absolute;left:509.6333333333334px;top:939px;width:1px;height:2px;background:#c8c8c8;"></div>
<div style="position:absolute;left:556.6666666666667px;top:939px;width:1px;height:2px;background:#c8c8c8;"></div>
<div style="position:absolute;left:603.7px;top:939px;width:1px;height:2px;background:#c8c8c8;"></div>
<div style="position:absolute;left:650.7333333333333px;top:939px;width:1px;height:2px;background:#c8c8c8;"></div>
<div style="position:absolute;left:697.7666666666667px;top:939px;width:1px;height:2px;background:#c8c8c8;"></div>
<div style="position:absolute;left:744.8000000000001px;top:939px;width:1px;height:2px;background:#c8c8c8;"></div>
<div style="position:absolute;left:323px;top:944px;width:422.5px;height:48px;background:linear-gradient(90deg,#38393b,#3d3f41);"></div>
<div style="position:absolute;left:323px;top:944px;width:266.5px;height:48px;background:#cbcccd;"></div>
<div style="position:absolute;left:589.5px;top:944px;width:22.5px;height:48px;background:#6ea465;"></div>
<div style="position:absolute;left:55.5px;top:953.4px;width:250px;text-align:center;line-height:28.6px;font-size:23.8px;font-weight:700;color:#b9babb;white-space:nowrap;">Short-term max</div>
<div style="position:absolute;left:748.5px;top:953.4px;width:200px;text-align:center;line-height:26.0px;font-size:21.7px;font-weight:700;color:#efefef;white-space:nowrap;">0.4 LU</div>
<div style="position:absolute;left:955px;top:1009px;width:40px;height:3px;background:#4c4f51;"></div>
<div style="position:absolute;left:956px;top:918px;width:38px;height:91px;background:linear-gradient(#c3c8cb,#a5a7ab);"></div>
<svg style="position:absolute;left:956px;top:943.5px" width="38" height="40" fill="none" stroke="#111" stroke-width="2.6"><path d="M13.8,14.8 L19,9.6 L24.2,14.8"/><path d="M13.8,25.6 L19,30.8 L24.2,25.6"/></svg>
<div style="position:absolute;left:310.0px;top:1020.0px;width:60px;text-align:center;line-height:21.4px;font-size:17.8px;font-weight:400;color:#e2e2e2;white-space:nowrap;">-18</div>
<div style="position:absolute;left:386.1px;top:1020.0px;width:60px;text-align:center;line-height:21.4px;font-size:17.8px;font-weight:400;color:#e2e2e2;white-space:nowrap;">-12</div>
<div style="position:absolute;left:433.1px;top:1020.0px;width:60px;text-align:center;line-height:21.4px;font-size:17.8px;font-weight:400;color:#e2e2e2;white-space:nowrap;">-9</div>
<div style="position:absolute;left:480.1px;top:1020.0px;width:60px;text-align:center;line-height:21.4px;font-size:17.8px;font-weight:400;color:#e2e2e2;white-space:nowrap;">-6</div>
<div style="position:absolute;left:527.2px;top:1020.0px;width:60px;text-align:center;line-height:21.4px;font-size:17.8px;font-weight:400;color:#e2e2e2;white-space:nowrap;">-3</div>
<div style="position:absolute;left:574.2px;top:1020.0px;width:60px;text-align:center;line-height:21.4px;font-size:17.8px;font-weight:400;color:#e2e2e2;white-space:nowrap;">0</div>
<div style="position:absolute;left:621.2px;top:1020.0px;width:60px;text-align:center;line-height:21.4px;font-size:17.8px;font-weight:400;color:#e2e2e2;white-space:nowrap;">3</div>
<div style="position:absolute;left:668.3px;top:1020.0px;width:60px;text-align:center;line-height:21.4px;font-size:17.8px;font-weight:400;color:#e2e2e2;white-space:nowrap;">6</div>
<div style="position:absolute;left:707.0px;top:1020.0px;width:60px;text-align:center;line-height:21.4px;font-size:17.8px;font-weight:400;color:#e2e2e2;white-space:nowrap;">9</div>
<div style="position:absolute;left:321.50000000000006px;top:1041.7px;width:1px;height:2px;background:#c8c8c8;"></div>
<div style="position:absolute;left:415.5666666666667px;top:1041.7px;width:1px;height:2px;background:#c8c8c8;"></div>
<div style="position:absolute;left:462.6px;top:1041.7px;width:1px;height:2px;background:#c8c8c8;"></div>
<div style="position:absolute;left:509.6333333333334px;top:1041.7px;width:1px;height:2px;background:#c8c8c8;"></div>
<div style="position:absolute;left:556.6666666666667px;top:1041.7px;width:1px;height:2px;background:#c8c8c8;"></div>
<div style="position:absolute;left:603.7px;top:1041.7px;width:1px;height:2px;background:#c8c8c8;"></div>
<div style="position:absolute;left:650.7333333333333px;top:1041.7px;width:1px;height:2px;background:#c8c8c8;"></div>
<div style="position:absolute;left:697.7666666666667px;top:1041.7px;width:1px;height:2px;background:#c8c8c8;"></div>
<div style="position:absolute;left:744.8000000000001px;top:1041.7px;width:1px;height:2px;background:#c8c8c8;"></div>
<div style="position:absolute;left:323px;top:1046.7px;width:422.5px;height:48.899999999999864px;background:linear-gradient(90deg,#38393b,#3d3f41);"></div>
<div style="position:absolute;left:323px;top:1046.7px;width:266.5px;height:48.899999999999864px;background:#cbcccd;"></div>
<div style="position:absolute;left:589.5px;top:1046.7px;width:10.5px;height:48.899999999999864px;background:#6ea465;"></div>
<div style="position:absolute;left:55.5px;top:1057.4px;width:250px;text-align:center;line-height:28.6px;font-size:23.8px;font-weight:700;color:#b9babb;white-space:nowrap;">Integrated</div>
<div style="position:absolute;left:748.5px;top:1057.9px;width:200px;text-align:center;line-height:26.0px;font-size:21.7px;font-weight:700;color:#efefef;white-space:nowrap;">-0.3 LU</div>
<div style="position:absolute;left:955px;top:1112.5px;width:40px;height:3px;background:#4c4f51;"></div>
<div style="position:absolute;left:956px;top:1021px;width:38px;height:91.5px;background:linear-gradient(#c3c8cb,#a5a7ab);"></div>
<svg style="position:absolute;left:956px;top:1046.8px" width="38" height="40" fill="none" stroke="#111" stroke-width="2.6"><path d="M13.8,14.8 L19,9.6 L24.2,14.8"/><path d="M13.8,25.6 L19,30.8 L24.2,25.6"/></svg>
<div style="position:absolute;left:310.0px;top:1123.9px;width:60px;text-align:center;line-height:21.4px;font-size:17.8px;font-weight:400;color:#e2e2e2;white-space:nowrap;">-18</div>
<div style="position:absolute;left:386.1px;top:1123.9px;width:60px;text-align:center;line-height:21.4px;font-size:17.8px;font-weight:400;color:#e2e2e2;white-space:nowrap;">-12</div>
<div style="position:absolute;left:433.1px;top:1123.9px;width:60px;text-align:center;line-height:21.4px;font-size:17.8px;font-weight:400;color:#e2e2e2;white-space:nowrap;">-9</div>
<div style="position:absolute;left:480.1px;top:1123.9px;width:60px;text-align:center;line-height:21.4px;font-size:17.8px;font-weight:400;color:#e2e2e2;white-space:nowrap;">-6</div>
<div style="position:absolute;left:527.2px;top:1123.9px;width:60px;text-align:center;line-height:21.4px;font-size:17.8px;font-weight:400;color:#e2e2e2;white-space:nowrap;">-3</div>
<div style="position:absolute;left:574.2px;top:1123.9px;width:60px;text-align:center;line-height:21.4px;font-size:17.8px;font-weight:400;color:#e2e2e2;white-space:nowrap;">0</div>
<div style="position:absolute;left:621.2px;top:1123.9px;width:60px;text-align:center;line-height:21.4px;font-size:17.8px;font-weight:400;color:#e2e2e2;white-space:nowrap;">3</div>
<div style="position:absolute;left:668.3px;top:1123.9px;width:60px;text-align:center;line-height:21.4px;font-size:17.8px;font-weight:400;color:#e2e2e2;white-space:nowrap;">6</div>
<div style="position:absolute;left:707.0px;top:1123.9px;width:60px;text-align:center;line-height:21.4px;font-size:17.8px;font-weight:400;color:#e2e2e2;white-space:nowrap;">9</div>
<div style="position:absolute;left:321.50000000000006px;top:1145.6px;width:1px;height:2px;background:#c8c8c8;"></div>
<div style="position:absolute;left:415.5666666666667px;top:1145.6px;width:1px;height:2px;background:#c8c8c8;"></div>
<div style="position:absolute;left:462.6px;top:1145.6px;width:1px;height:2px;background:#c8c8c8;"></div>
<div style="position:absolute;left:509.6333333333334px;top:1145.6px;width:1px;height:2px;background:#c8c8c8;"></div>
<div style="position:absolute;left:556.6666666666667px;top:1145.6px;width:1px;height:2px;background:#c8c8c8;"></div>
<div style="position:absolute;left:603.7px;top:1145.6px;width:1px;height:2px;background:#c8c8c8;"></div>
<div style="position:absolute;left:650.7333333333333px;top:1145.6px;width:1px;height:2px;background:#c8c8c8;"></div>
<div style="position:absolute;left:697.7666666666667px;top:1145.6px;width:1px;height:2px;background:#c8c8c8;"></div>
<div style="position:absolute;left:744.8000000000001px;top:1145.6px;width:1px;height:2px;background:#c8c8c8;"></div>
<div style="position:absolute;left:323px;top:1150.6px;width:422.5px;height:49.40000000000009px;background:linear-gradient(90deg,#2e3032,#3a3c3e);"></div>
<div style="position:absolute;left:587px;top:1150.6px;width:17.8px;height:49.40000000000009px;background:#cbcccd;"></div>
<div style="position:absolute;left:604.8px;top:1150.6px;width:6.2px;height:49.40000000000009px;background:#a85656;"></div>
<div style="position:absolute;left:55.5px;top:1161.6px;width:250px;text-align:center;line-height:28.6px;font-size:23.8px;font-weight:700;color:#b9babb;white-space:nowrap;">Range</div>
<div style="position:absolute;left:748.5px;top:1161.9px;width:200px;text-align:center;line-height:26.0px;font-size:21.7px;font-weight:700;color:#efefef;white-space:nowrap;">1.4 LU</div>
<div style="position:absolute;left:955px;top:1216.5px;width:40px;height:3px;background:#4c4f51;"></div>
<div style="position:absolute;left:956px;top:1125px;width:38px;height:91.5px;background:linear-gradient(#c3c8cb,#a5a7ab);"></div>
<svg style="position:absolute;left:956px;top:1150.8px" width="38" height="40" fill="none" stroke="#111" stroke-width="2.6"><path d="M13.8,14.8 L19,9.6 L24.2,14.8"/><path d="M13.8,25.6 L19,30.8 L24.2,25.6"/></svg>
<svg style="position:absolute;left:1025px;top:436px" width="10" height="850"><ellipse cx="5" cy="3.6" rx="2.7" ry="1.9" fill="#706e6a"/><ellipse cx="5" cy="11.7" rx="2.7" ry="1.9" fill="#706e6a"/><ellipse cx="5" cy="19.7" rx="2.7" ry="1.9" fill="#706e6a"/><ellipse cx="5" cy="27.8" rx="2.7" ry="1.9" fill="#706e6a"/><ellipse cx="5" cy="35.8" rx="2.7" ry="1.9" fill="#706e6a"/><ellipse cx="5" cy="43.9" rx="2.7" ry="1.9" fill="#706e6a"/><ellipse cx="5" cy="51.9" rx="2.7" ry="1.9" fill="#706e6a"/><ellipse cx="5" cy="60.0" rx="2.7" ry="1.9" fill="#706e6a"/><ellipse cx="5" cy="68.0" rx="2.7" ry="1.9" fill="#706e6a"/><ellipse cx="5" cy="76.0" rx="2.7" ry="1.9" fill="#706e6a"/><ellipse cx="5" cy="84.1" rx="2.7" ry="1.9" fill="#706e6a"/><ellipse cx="5" cy="92.1" rx="2.7" ry="1.9" fill="#706e6a"/><ellipse cx="5" cy="100.2" rx="2.7" ry="1.9" fill="#706e6a"/><ellipse cx="5" cy="108.2" rx="2.7" ry="1.9" fill="#706e6a"/><ellipse cx="5" cy="116.3" rx="2.7" ry="1.9" fill="#706e6a"/><ellipse cx="5" cy="124.3" rx="2.7" ry="1.9" fill="#706e6a"/><ellipse cx="5" cy="132.4" rx="2.7" ry="1.9" fill="#706e6a"/><ellipse cx="5" cy="140.4" rx="2.7" ry="1.9" fill="#706e6a"/><ellipse cx="5" cy="148.5" rx="2.7" ry="1.9" fill="#706e6a"/><ellipse cx="5" cy="156.6" rx="2.7" ry="1.9" fill="#706e6a"/><ellipse cx="5" cy="164.6" rx="2.7" ry="1.9" fill="#706e6a"/><ellipse cx="5" cy="172.7" rx="2.7" ry="1.9" fill="#706e6a"/><ellipse cx="5" cy="180.7" rx="2.7" ry="1.9" fill="#706e6a"/><ellipse cx="5" cy="188.8" rx="2.7" ry="1.9" fill="#706e6a"/><ellipse cx="5" cy="196.8" rx="2.7" ry="1.9" fill="#706e6a"/><ellipse cx="5" cy="204.9" rx="2.7" ry="1.9" fill="#706e6a"/><ellipse cx="5" cy="212.9" rx="2.7" ry="1.9" fill="#706e6a"/><ellipse cx="5" cy="221.0" rx="2.7" ry="1.9" fill="#706e6a"/><ellipse cx="5" cy="229.0" rx="2.7" ry="1.9" fill="#706e6a"/><ellipse cx="5" cy="237.1" rx="2.7" ry="1.9" fill="#706e6a"/><ellipse cx="5" cy="245.1" rx="2.7" ry="1.9" fill="#706e6a"/><ellipse cx="5" cy="253.2" rx="2.7" ry="1.9" fill="#706e6a"/><ellipse cx="5" cy="261.2" rx="2.7" ry="1.9" fill="#706e6a"/><ellipse cx="5" cy="269.3" rx="2.7" ry="1.9" fill="#706e6a"/><ellipse cx="5" cy="277.3" rx="2.7" ry="1.9" fill="#706e6a"/><ellipse cx="5" cy="285.4" rx="2.7" ry="1.9" fill="#706e6a"/><ellipse cx="5" cy="293.4" rx="2.7" ry="1.9" fill="#706e6a"/><ellipse cx="5" cy="301.5" rx="2.7" ry="1.9" fill="#706e6a"/><ellipse cx="5" cy="309.5" rx="2.7" ry="1.9" fill="#706e6a"/><ellipse cx="5" cy="317.6" rx="2.7" ry="1.9" fill="#706e6a"/><ellipse cx="5" cy="325.6" rx="2.7" ry="1.9" fill="#706e6a"/><ellipse cx="5" cy="333.7" rx="2.7" ry="1.9" fill="#706e6a"/><ellipse cx="5" cy="341.7" rx="2.7" ry="1.9" fill="#706e6a"/><ellipse cx="5" cy="349.8" rx="2.7" ry="1.9" fill="#706e6a"/><ellipse cx="5" cy="357.8" rx="2.7" ry="1.9" fill="#706e6a"/><ellipse cx="5" cy="365.9" rx="2.7" ry="1.9" fill="#706e6a"/><ellipse cx="5" cy="373.9" rx="2.7" ry="1.9" fill="#706e6a"/><ellipse cx="5" cy="382.0" rx="2.7" ry="1.9" fill="#706e6a"/><ellipse cx="5" cy="390.0" rx="2.7" ry="1.9" fill="#706e6a"/><ellipse cx="5" cy="398.1" rx="2.7" ry="1.9" fill="#706e6a"/><ellipse cx="5" cy="406.1" rx="2.7" ry="1.9" fill="#706e6a"/><ellipse cx="5" cy="414.2" rx="2.7" ry="1.9" fill="#706e6a"/><ellipse cx="5" cy="422.2" rx="2.7" ry="1.9" fill="#706e6a"/><ellipse cx="5" cy="430.3" rx="2.7" ry="1.9" fill="#706e6a"/><ellipse cx="5" cy="438.3" rx="2.7" ry="1.9" fill="#706e6a"/><ellipse cx="5" cy="446.4" rx="2.7" ry="1.9" fill="#706e6a"/><ellipse cx="5" cy="454.4" rx="2.7" ry="1.9" fill="#706e6a"/><ellipse cx="5" cy="462.5" rx="2.7" ry="1.9" fill="#706e6a"/><ellipse cx="5" cy="470.5" rx="2.7" ry="1.9" fill="#706e6a"/><ellipse cx="5" cy="478.6" rx="2.7" ry="1.9" fill="#706e6a"/><ellipse cx="5" cy="486.6" rx="2.7" ry="1.9" fill="#706e6a"/><ellipse cx="5" cy="494.7" rx="2.7" ry="1.9" fill="#706e6a"/><ellipse cx="5" cy="502.7" rx="2.7" ry="1.9" fill="#706e6a"/><ellipse cx="5" cy="510.8" rx="2.7" ry="1.9" fill="#706e6a"/><ellipse cx="5" cy="518.8" rx="2.7" ry="1.9" fill="#706e6a"/><ellipse cx="5" cy="526.9" rx="2.7" ry="1.9" fill="#706e6a"/><ellipse cx="5" cy="534.9" rx="2.7" ry="1.9" fill="#706e6a"/><ellipse cx="5" cy="543.0" rx="2.7" ry="1.9" fill="#706e6a"/><ellipse cx="5" cy="551.0" rx="2.7" ry="1.9" fill="#706e6a"/><ellipse cx="5" cy="559.1" rx="2.7" ry="1.9" fill="#706e6a"/><ellipse cx="5" cy="567.1" rx="2.7" ry="1.9" fill="#706e6a"/><ellipse cx="5" cy="575.2" rx="2.7" ry="1.9" fill="#706e6a"/><ellipse cx="5" cy="583.2" rx="2.7" ry="1.9" fill="#706e6a"/><ellipse cx="5" cy="591.3" rx="2.7" ry="1.9" fill="#706e6a"/><ellipse cx="5" cy="599.3" rx="2.7" ry="1.9" fill="#706e6a"/><ellipse cx="5" cy="607.4" rx="2.7" ry="1.9" fill="#706e6a"/><ellipse cx="5" cy="615.4" rx="2.7" ry="1.9" fill="#706e6a"/><ellipse cx="5" cy="623.4" rx="2.7" ry="1.9" fill="#706e6a"/><ellipse cx="5" cy="631.5" rx="2.7" ry="1.9" fill="#706e6a"/><ellipse cx="5" cy="639.5" rx="2.7" ry="1.9" fill="#706e6a"/><ellipse cx="5" cy="647.6" rx="2.7" ry="1.9" fill="#706e6a"/><ellipse cx="5" cy="655.6" rx="2.7" ry="1.9" fill="#706e6a"/><ellipse cx="5" cy="663.7" rx="2.7" ry="1.9" fill="#706e6a"/><ellipse cx="5" cy="671.7" rx="2.7" ry="1.9" fill="#706e6a"/><ellipse cx="5" cy="679.8" rx="2.7" ry="1.9" fill="#706e6a"/><ellipse cx="5" cy="687.8" rx="2.7" ry="1.9" fill="#706e6a"/><ellipse cx="5" cy="695.9" rx="2.7" ry="1.9" fill="#706e6a"/><ellipse cx="5" cy="703.9" rx="2.7" ry="1.9" fill="#706e6a"/><ellipse cx="5" cy="712.0" rx="2.7" ry="1.9" fill="#706e6a"/><ellipse cx="5" cy="720.0" rx="2.7" ry="1.9" fill="#706e6a"/><ellipse cx="5" cy="728.1" rx="2.7" ry="1.9" fill="#706e6a"/><ellipse cx="5" cy="736.1" rx="2.7" ry="1.9" fill="#706e6a"/><ellipse cx="5" cy="744.2" rx="2.7" ry="1.9" fill="#706e6a"/><ellipse cx="5" cy="752.2" rx="2.7" ry="1.9" fill="#706e6a"/><ellipse cx="5" cy="760.3" rx="2.7" ry="1.9" fill="#706e6a"/><ellipse cx="5" cy="768.3" rx="2.7" ry="1.9" fill="#706e6a"/><ellipse cx="5" cy="776.4" rx="2.7" ry="1.9" fill="#706e6a"/><ellipse cx="5" cy="784.4" rx="2.7" ry="1.9" fill="#706e6a"/><ellipse cx="5" cy="792.5" rx="2.7" ry="1.9" fill="#706e6a"/><ellipse cx="5" cy="800.5" rx="2.7" ry="1.9" fill="#706e6a"/><ellipse cx="5" cy="808.6" rx="2.7" ry="1.9" fill="#706e6a"/><ellipse cx="5" cy="816.6" rx="2.7" ry="1.9" fill="#706e6a"/><ellipse cx="5" cy="824.7" rx="2.7" ry="1.9" fill="#706e6a"/><ellipse cx="5" cy="832.7" rx="2.7" ry="1.9" fill="#706e6a"/><ellipse cx="5" cy="840.8" rx="2.7" ry="1.9" fill="#706e6a"/></svg>
<div style="position:absolute;left:19px;top:1248.5px;width:1000px;height:31.5px;background:linear-gradient(#c0c6c9,#a4a6ab);border:1px solid #2a2b2c;box-sizing:border-box;"></div>
<div style="position:absolute;left:1041px;top:1248.5px;width:689px;height:31.5px;background:linear-gradient(#c0c6c9,#a4a6ab);border:1px solid #2a2b2c;box-sizing:border-box;"></div>
<svg style="position:absolute;left:500px;top:1252px" width="40" height="24" fill="none" stroke="#111" stroke-width="2.6"><path d="M13,7.5 L9,11.5 L13,15.5"/><path d="M24,7.5 L28,11.5 L24,15.5"/></svg>
<svg style="position:absolute;left:1365px;top:1252px" width="40" height="24" fill="none" stroke="#111" stroke-width="2.6"><path d="M15,7.5 L11,11.5 L15,15.5"/><path d="M26,7.5 L30,11.5 L26,15.5"/></svg>
<svg style="position:absolute;left:1770px;top:1270px" width="26" height="26"><polygon points="25,5 25,25 5,25" fill="#050505"/></svg>
<div style="position:absolute;left:1042px;top:441.5px;width:687px;height:799px;background:#888;border-radius:10px;opacity:0.6;"></div>
<div style="position:absolute;left:1042px;top:441.5px;width:687px;height:796.5px;background:#bdbdbd;border-radius:10px;"></div>
<div style="position:absolute;left:1043.5px;top:443px;width:684px;height:793px;background:#141516;border-radius:9px;"></div>
<div style="position:absolute;left:1045px;top:444.5px;width:681px;height:789.5px;background:linear-gradient(#303335,#2a2c2e 50%,#212224 94%,#1a1b1d);border-radius:8px;"></div>
<div style="position:absolute;left:1731.0px;top:668.2px;width:60px;text-align:center;line-height:21.4px;font-size:17.8px;font-weight:400;color:#181818;white-space:nowrap;">WAV</div>
<div style="position:absolute;left:1065px;top:612px;width:43px;height:3px;background:#4c4f51;"></div>
<div style="position:absolute;left:1066px;top:464px;width:41px;height:148px;background:linear-gradient(#c3c8cb,#a5a7ab);"></div>
<div style="position:absolute;left:1065px;top:772px;width:43px;height:3px;background:#4c4f51;"></div>
<div style="position:absolute;left:1066px;top:624px;width:41px;height:148px;background:linear-gradient(#c3c8cb,#a5a7ab);"></div>
<div style="position:absolute;left:1065px;top:932px;width:43px;height:3px;background:#4c4f51;"></div>
<div style="position:absolute;left:1066px;top:784px;width:41px;height:148px;background:radial-gradient(ellipse at 50% 50%,#7fb0f4,#4b80cf 60%,#3f71bd);"></div>
<div style="position:absolute;left:1065px;top:1094px;width:43px;height:3px;background:#4c4f51;"></div>
<div style="position:absolute;left:1066px;top:944px;width:41px;height:150px;background:linear-gradient(#c3c8cb,#a5a7ab);"></div>
<div style="position:absolute;left:1065px;top:1135px;width:43px;height:3px;background:#4c4f51;"></div>
<div style="position:absolute;left:1066px;top:1106px;width:41px;height:29px;background:linear-gradient(#c3c8cb,#a5a7ab);"></div>
<div style="position:absolute;left:1065px;top:1176px;width:43px;height:3px;background:#4c4f51;"></div>
<div style="position:absolute;left:1066px;top:1147px;width:41px;height:29px;background:radial-gradient(ellipse at 50% 50%,#7fb0f4,#4b80cf 60%,#3f71bd);"></div>
<div style="position:absolute;left:1065px;top:1217px;width:43px;height:3px;background:#4c4f51;"></div>
<div style="position:absolute;left:1066px;top:1188px;width:41px;height:29px;background:linear-gradient(#c3c8cb,#a5a7ab);"></div>
<svg style="position:absolute;left:1066px;top:464px" width="41" height="760"><circle cx="20" cy="73" r="13" fill="#0a0a0a"/><rect x="13.5" y="72" width="13" height="2.2" fill="#e8e8e8"/><rect x="18.9" y="66.5" width="2.2" height="13" fill="#e8e8e8"/><circle cx="20" cy="233" r="13" fill="#0a0a0a"/><rect x="13.5" y="232" width="13" height="2.4" fill="#e8e8e8"/><polygon points="10,382 17.5,393 10,404" fill="#0a0a0a"/><polygon points="18.5,382 26,393 18.5,404" fill="#0a0a0a"/><rect x="15" y="549" width="11" height="1.8" fill="#111"/><rect x="15" y="554" width="11" height="1.8" fill="#111"/><rect x="15" y="559" width="11" height="1.8" fill="#111"/><rect x="12" y="646" width="5.5" height="20" rx="1.5" fill="#0a0a0a"/><rect x="23" y="646" width="5.5" height="20" rx="1.5" fill="#0a0a0a"/><path d="M15,689.5 A10.5,10.5 0 1 0 25.5,689.5" fill="none" stroke="#0a1a3a" stroke-width="1.8"/><rect x="19.4" y="684" width="1.8" height="11" fill="#0a1a3a"/><circle cx="20" cy="738.5" r="13" fill="#0a0a0a"/><text x="20" y="745.5" text-anchor="middle" font-family="Liberation Sans" font-size="19" fill="#eeeeee">?</text></svg>
<div style="position:absolute;left:1104.0px;top:465.6px;width:80px;text-align:right;line-height:20.4px;font-size:17px;font-weight:400;color:#a9abac;white-space:nowrap;letter-spacing:-0.4px;">9 LU</div>
<div style="position:absolute;left:1104.0px;top:539.1px;width:80px;text-align:right;line-height:20.4px;font-size:17px;font-weight:400;color:#a9abac;white-space:nowrap;letter-spacing:-0.4px;">6 LU</div>
<div style="position:absolute;left:1104.0px;top:622.6px;width:80px;text-align:right;line-height:20.4px;font-size:17px;font-weight:400;color:#a9abac;white-space:nowrap;letter-spacing:-0.4px;">3 LU</div>
<div style="position:absolute;left:1104.0px;top:706.1px;width:80px;text-align:right;line-height:20.4px;font-size:17px;font-weight:400;color:#a9abac;white-space:nowrap;letter-spacing:-0.4px;">0 LU</div>
<div style="position:absolute;left:1104.0px;top:789.6px;width:80px;text-align:right;line-height:20.4px;font-size:17px;font-weight:400;color:#a9abac;white-space:nowrap;letter-spacing:-0.4px;">-3 LU</div>
<div style="position:absolute;left:1104.0px;top:873.1px;width:80px;text-align:right;line-height:20.4px;font-size:17px;font-weight:400;color:#a9abac;white-space:nowrap;letter-spacing:-0.4px;">-6 LU</div>
<div style="position:absolute;left:1104.0px;top:956.6px;width:80px;text-align:right;line-height:20.4px;font-size:17px;font-weight:400;color:#a9abac;white-space:nowrap;letter-spacing:-0.4px;">-9 LU</div>
<div style="position:absolute;left:1104.0px;top:1040.1px;width:80px;text-align:right;line-height:20.4px;font-size:17px;font-weight:400;color:#a9abac;white-space:nowrap;letter-spacing:-0.4px;">-12 LU</div>
<div style="position:absolute;left:1104.0px;top:1123.9px;width:80px;text-align:right;line-height:20.4px;font-size:17px;font-weight:400;color:#a9abac;white-space:nowrap;letter-spacing:-0.4px;">-15 LU</div>
<div style="position:absolute;left:1104.0px;top:1195.6px;width:80px;text-align:right;line-height:20.4px;font-size:17px;font-weight:400;color:#a9abac;white-space:nowrap;letter-spacing:-0.4px;">-18 LU</div>
<svg style="position:absolute;left:1670px;top:455px" width="40" height="780"><path d="M7.5,18.5 L20,5.5 L32.5,18.5 V605 L20,618 L7.5,605 Z" fill="#1d1f21" stroke="#4d5052" stroke-width="1.2"/><polygon points="20,10.8 27.3,19 12.7,19" fill="#8c8d8f"/><polygon points="12.7,604.5 27.3,604.5 20,613.5" fill="#8c8d8f"/><rect x="12.5" y="25.5" width="15.2" height="573" rx="7.6" fill="#a0a1a3"/><path d="M15,635 V631 A5,5 0 0 1 25,631 V635" fill="none" stroke="#ececee" stroke-width="2.6"/><rect x="11" y="635.4" width="18.3" height="14.6" rx="1.5" fill="#ececee"/><circle cx="18" cy="674" r="8.2" fill="none" stroke="#f4f4f4" stroke-width="2.2"/><path d="M24,680 L30,686.5" stroke="#f4f4f4" stroke-width="2.6"/><path d="M13.5,674 H22.5 M18,669.5 V678.5" stroke="#f4f4f4" stroke-width="2"/><circle cx="18" cy="711" r="8.2" fill="none" stroke="#6b6c6d" stroke-width="2.2"/><path d="M24,717 L30,723.5" stroke="#6b6c6d" stroke-width="2.6"/><path d="M13.5,711 H22.5" stroke="#6b6c6d" stroke-width="2"/><circle cx="18" cy="748" r="8.2" fill="none" stroke="#6b6c6d" stroke-width="2.2"/><path d="M24,754 L30,760.5" stroke="#6b6c6d" stroke-width="2.6"/><circle cx="18" cy="748" r="3" fill="#6b6c6d"/></svg>
<svg style="position:absolute;left:1191px;top:466px" width="475" height="751">
<rect width="475" height="751" fill="#2f3234"/>
<rect x="18.7" y="0" width="1" height="751" fill="#292b2d"/>
<rect x="38.9" y="0" width="1" height="751" fill="#292b2d"/>
<rect x="59.0" y="0" width="1" height="751" fill="#292b2d"/>
<rect x="79.2" y="0" width="1" height="751" fill="#232527"/>
<rect x="99.3" y="0" width="1" height="751" fill="#292b2d"/>
<rect x="119.5" y="0" width="1" height="751" fill="#292b2d"/>
<rect x="139.6" y="0" width="1" height="751" fill="#292b2d"/>
<rect x="159.8" y="0" width="1" height="751" fill="#232527"/>
<rect x="179.9" y="0" width="1" height="751" fill="#292b2d"/>
<rect x="200.1" y="0" width="1" height="751" fill="#292b2d"/>
<rect x="220.2" y="0" width="1" height="751" fill="#292b2d"/>
<rect x="240.4" y="0" width="1" height="751" fill="#232527"/>
<rect x="260.5" y="0" width="1" height="751" fill="#292b2d"/>
<rect x="280.7" y="0" width="1" height="751" fill="#292b2d"/>
<rect x="300.8" y="0" width="1" height="751" fill="#292b2d"/>
<rect x="321.0" y="0" width="1" height="751" fill="#232527"/>
<rect x="341.1" y="0" width="1" height="751" fill="#292b2d"/>
<rect x="361.3" y="0" width="1" height="751" fill="#292b2d"/>
<rect x="381.4" y="0" width="1" height="751" fill="#292b2d"/>
<rect x="401.6" y="0" width="1" height="751" fill="#232527"/>
<rect x="421.7" y="0" width="1" height="751" fill="#292b2d"/>
<rect x="441.9" y="0" width="1" height="751" fill="#292b2d"/>
<rect x="462.0" y="0" width="1" height="751" fill="#292b2d"/>
<rect x="0" y="-0.8" width="475" height="1" fill="#212325"/>
<rect x="0" y="27.0" width="475" height="1" fill="#292b2d"/>
<rect x="0" y="54.8" width="475" height="1" fill="#292b2d"/>
<rect x="0" y="82.6" width="475" height="1" fill="#212325"/>
<rect x="0" y="110.4" width="475" height="1" fill="#292b2d"/>
<rect x="0" y="138.2" width="475" height="1" fill="#292b2d"/>
<rect x="0" y="166.1" width="475" height="1" fill="#212325"/>
<rect x="0" y="193.9" width="475" height="1" fill="#292b2d"/>
<rect x="0" y="221.7" width="475" height="1" fill="#292b2d"/>
<rect x="0" y="249.5" width="475" height="1" fill="#212325"/>
<rect x="0" y="277.3" width="475" height="1" fill="#292b2d"/>
<rect x="0" y="305.1" width="475" height="1" fill="#292b2d"/>
<rect x="0" y="332.9" width="475" height="1" fill="#212325"/>
<rect x="0" y="360.8" width="475" height="1" fill="#292b2d"/>
<rect x="0" y="388.6" width="475" height="1" fill="#292b2d"/>
<rect x="0" y="416.4" width="475" height="1" fill="#212325"/>
<rect x="0" y="444.2" width="475" height="1" fill="#292b2d"/>
<rect x="0" y="472.0" width="475" height="1" fill="#292b2d"/>
<rect x="0" y="499.8" width="475" height="1" fill="#212325"/>
<rect x="0" y="527.6" width="475" height="1" fill="#292b2d"/>
<rect x="0" y="555.5" width="475" height="1" fill="#292b2d"/>
<rect x="0" y="583.3" width="475" height="1" fill="#212325"/>
<rect x="0" y="611.1" width="475" height="1" fill="#292b2d"/>
<rect x="0" y="638.9" width="475" height="1" fill="#292b2d"/>
<rect x="0" y="666.7" width="475" height="1" fill="#212325"/>
<rect x="0" y="694.5" width="475" height="1" fill="#292b2d"/>
<rect x="0" y="722.4" width="475" height="1" fill="#292b2d"/>
<rect x="0" y="750.2" width="475" height="1" fill="#212325"/>
<rect x="0" y="236.5" width="475" height="27.5" fill="#8a1a1e" fill-opacity="0.55"/>
<polygon points="0.0,250.0 38.0,250.0 38.0,264.0 279.0,264.0 279.0,253.0 399.0,253.0 399.0,248.0 475.0,248.0 475.0,751.0 0.0,751.0" fill="#5e4e14"/>
<polygon points="38.0,250.0 54.0,250.0 59.5,264.0 59.5,266.0 49.0,265.0 41.0,262.0" fill="#8b1a1c"/>
<polygon points="85.5,264.0 169.0,264.0 169.0,451.0 151.0,449.5 144.0,441.6 140.5,415.5 139.0,384.0 130.0,387.0 122.0,402.0 117.0,441.6 114.0,488.0 100.0,486.0 96.0,468.0 92.0,389.0 88.0,311.0" fill="#8b1a1c"/>
<polygon points="398.0,248.0 419.0,248.0 424.4,261.0 424.4,368.6 411.3,363.0 405.0,355.5 400.5,301.7" fill="#8b1a1c"/>
<polygon points="0.0,250.0 23.6,250.0 48.0,751.0 0.0,751.0" fill="#857549"/>
<polygon points="59.6,264.0 71.0,264.0 96.6,751.0 59.6,751.0" fill="#857549"/>
<polygon points="115.0,488.0 117.0,441.6 122.0,402.0 130.0,387.0 139.0,384.0 140.5,415.5 138.5,451.0 153.7,751.0 115.0,751.0" fill="#857549"/>
<polygon points="170.0,264.0 244.6,264.0 270.0,751.0 170.0,751.0" fill="#857549"/>
<polygon points="279.8,253.0 398.0,253.0 400.5,301.7 405.0,355.5 411.3,363.0 424.4,368.6 425.0,248.0 449.0,248.0 474.4,751.0 279.8,751.0" fill="#857549"/>
<polygon points="0.0,534.0 5.0,534.0 5.0,751.0 0.0,751.0" fill="#5e4e14"/>
<polygon points="0.0,250.0 0.0,252.0 5.0,255.0 6.0,234.0 8.0,206.0 11.0,189.0 16.0,180.0 30.0,178.0 31.0,204.0 33.0,234.0 35.0,250.0" fill="#1f9a22" fill-opacity="0.55"/>
<polygon points="59.6,264.0 61.0,256.0 65.0,250.0 71.0,249.0 85.5,249.0 86.5,264.0" fill="#1f9a22" fill-opacity="0.55"/>
<polygon points="169.6,294.0 175.0,257.6 180.5,234.4 194.8,231.0 196.8,237.8 201.0,246.0 207.7,249.4 215.9,248.0 222.7,241.0 225.4,235.8 227.0,224.0 229.0,194.0 233.0,180.0 239.0,175.0 253.0,174.0 254.4,221.0 255.8,238.5 260.0,257.5 268.0,261.0 280.0,265.0 280.0,264.0 175.0,264.0" fill="#1f9a22" fill-opacity="0.55"/>
<polygon points="280.0,265.0 281.3,232.5 285.0,194.0 289.0,179.0 297.0,177.0 304.9,177.5 310.0,206.0 314.0,234.0 318.0,245.5 321.0,250.0 328.4,248.0 333.6,245.5 336.0,180.0 340.0,179.0 344.0,219.0 346.7,232.5 353.8,254.0 370.0,253.5 374.0,235.8 383.7,227.0 393.8,223.0 396.4,243.0 398.0,253.0 280.0,253.0" fill="#1f9a22" fill-opacity="0.55"/>
<polygon points="425.0,264.0 427.8,253.4 431.0,234.0 435.6,223.3 448.7,222.5 452.6,232.5 456.6,243.0 464.0,247.0 475.0,250.8 475.0,248.0 425.0,248.0" fill="#1f9a22" fill-opacity="0.55"/>
<polyline points="0.0,252.0 5.0,255.0 6.0,234.0 8.0,206.0 11.0,189.0 16.0,180.0 30.0,178.0 31.0,204.0 33.0,234.0 36.0,256.0 41.0,262.0 49.0,265.0 59.0,266.0" fill="none" stroke="#4fd040" stroke-opacity="0.85" stroke-width="1.1"/>
<polyline points="59.6,264.0 61.0,256.0 65.0,250.0 71.0,249.0 85.5,249.0 86.5,274.0 88.0,311.0 92.0,389.0 96.0,468.0 100.0,486.0 114.0,488.0" fill="none" stroke="#4fd040" stroke-opacity="0.85" stroke-width="1.1"/>
<polyline points="114.0,488.0 117.0,441.6 122.0,402.0 130.0,387.0 139.0,384.0 140.5,415.5 144.0,441.6 151.0,449.5 169.0,451.0 169.6,294.0 175.0,257.6 180.5,234.4 194.8,231.0 196.8,237.8 201.0,246.0 207.7,249.4 215.9,248.0 222.7,241.0 225.4,235.8 227.0,224.0 229.0,194.0 233.0,180.0 239.0,175.0 253.0,174.0 254.4,221.0 255.8,238.5 260.0,257.5 268.0,261.0 280.0,265.0 280.0,264.0" fill="none" stroke="#4fd040" stroke-opacity="0.85" stroke-width="1.1"/>
<polyline points="281.3,232.5 285.0,194.0 289.0,179.0 297.0,177.0 304.9,177.5 310.0,206.0 314.0,234.0 318.0,245.5 321.0,250.0 328.4,248.0 333.6,245.5 336.0,180.0 340.0,179.0 344.0,219.0 346.7,232.5 353.8,254.0 370.0,253.5 374.0,235.8 383.7,227.0 393.8,223.0 396.4,243.0 398.0,253.0 398.2,247.8 400.5,301.7 405.0,355.5 411.3,363.0 424.4,368.6 426.0,294.0 427.8,253.4 431.0,234.0 435.6,223.3 448.7,222.5 452.6,232.5 456.6,243.0 464.0,247.0 475.0,250.8" fill="none" stroke="#4fd040" stroke-opacity="0.85" stroke-width="1.1"/>
<polygon points="0.0,250.0 5.0,250.0 5.0,534.0 0.0,534.0" fill="#f2f1ec" fill-opacity="0.44"/>
<polygon points="5.0,0.0 12.0,0.0 13.2,24.4 13.7,47.9 14.3,70.6 14.9,92.4 15.4,113.4 16.0,133.6 16.5,153.0 17.0,171.5 17.4,189.2 17.9,206.1 18.4,222.2 18.8,237.4 19.2,251.7 19.7,265.3 20.1,278.0 20.5,289.9 20.9,300.9 21.4,311.2 21.8,320.6 22.3,329.1 22.8,336.8 23.4,343.7 24.1,349.8 24.9,355.0 25.9,359.4 27.1,363.0 28.6,365.8 30.3,367.7 31.6,368.8 32.0,369.0 34.5,369.2 37.0,368.8 39.5,367.5 42.0,369.1 44.5,369.0 47.0,368.7 49.5,370.1 52.0,369.0 54.5,368.5 57.0,367.9 59.5,370.5 59.6,369.0 59.6,376.8 59.5,375.9 57.0,377.3 54.5,377.0 52.0,376.8 49.5,376.1 47.0,376.9 44.5,376.8 42.0,376.7 39.5,377.6 37.0,376.9 34.5,376.7 32.0,376.8 31.6,376.9 30.3,377.5 28.6,378.5 27.1,380.0 25.9,382.0 24.9,384.4 24.1,387.3 23.4,390.6 22.8,394.4 22.3,398.7 21.8,403.4 21.4,408.6 20.9,414.2 20.5,420.3 20.1,426.8 19.7,433.8 19.2,441.2 18.8,449.2 18.4,457.5 17.9,466.3 17.4,475.6 17.0,485.4 16.5,495.5 16.0,506.2 15.4,517.3 14.9,528.9 14.3,540.9 13.7,553.4 13.2,566.3 6.5,579.7 5.0,579.7" fill="#f2f1ec" fill-opacity="0.44" stroke="#f0efea" stroke-opacity="0.75" stroke-width="1.3"/>
<polygon points="59.6,107.0 64.6,107.0 66.1,124.3 66.7,141.1 67.3,157.2 67.9,172.8 68.4,187.8 69.0,202.1 69.5,215.9 70.1,229.1 70.6,241.7 71.1,253.7 71.6,265.1 72.1,275.9 72.5,286.1 73.0,295.7 73.5,304.8 74.0,313.2 74.5,321.0 75.1,328.3 75.6,334.9 76.3,341.0 77.0,346.5 77.8,351.3 78.7,355.6 79.8,359.3 81.1,362.4 82.6,364.9 84.4,366.8 86.1,368.1 87.3,368.9 87.6,369.0 90.1,369.7 92.6,370.5 95.1,367.9 97.6,368.3 100.1,370.6 102.6,367.3 105.1,367.3 107.6,368.4 110.1,368.6 112.6,370.2 114.5,369.0 114.5,378.2 112.6,377.2 110.1,378.5 107.6,378.7 105.1,379.6 102.6,379.7 100.1,376.8 97.6,378.8 95.1,379.1 92.6,377.0 90.1,377.6 87.6,378.2 87.3,378.3 86.1,378.9 84.4,380.0 82.6,381.6 81.1,383.7 79.8,386.3 78.7,389.4 77.8,393.0 77.0,397.1 76.3,401.7 75.6,406.8 75.1,412.4 74.5,418.5 74.0,425.1 73.5,432.2 73.0,439.8 72.5,447.8 72.1,456.4 71.6,465.5 71.1,475.1 70.6,485.2 70.1,495.7 69.5,506.8 69.0,518.4 68.4,530.5 67.9,543.0 67.3,556.1 66.7,569.7 66.1,583.7 61.1,598.3 59.6,598.3" fill="#f2f1ec" fill-opacity="0.44" stroke="#f0efea" stroke-opacity="0.75" stroke-width="1.3"/>
<polygon points="114.5,65.0 118.5,65.0 119.8,85.1 120.4,104.5 121.0,123.2 121.5,141.2 122.1,158.6 122.6,175.2 123.2,191.2 123.7,206.5 124.2,221.1 124.6,235.0 125.1,248.2 125.6,260.8 126.0,272.6 126.5,283.8 126.9,294.2 127.4,304.0 127.8,313.1 128.3,321.6 128.8,329.3 129.4,336.3 130.0,342.7 130.6,348.4 131.4,353.3 132.3,357.6 133.4,361.2 134.8,364.2 136.3,366.4 138.0,368.0 139.2,368.8 139.5,369.0 142.0,370.7 144.5,368.9 147.0,370.6 149.5,370.1 152.0,369.9 154.5,370.7 157.0,369.1 159.5,369.2 162.0,367.8 164.5,368.9 167.0,368.5 169.5,369.0 170.0,369.0 170.0,377.7 169.5,377.7 167.0,378.1 164.5,377.8 162.0,378.6 159.5,377.5 157.0,377.6 154.5,376.4 152.0,377.0 149.5,376.9 147.0,376.5 144.5,377.8 142.0,376.4 139.5,377.7 139.2,377.8 138.0,378.5 136.3,379.6 134.8,381.3 133.4,383.4 132.3,386.1 131.4,389.3 130.6,393.0 130.0,397.2 129.4,401.9 128.8,407.1 128.3,412.8 127.8,419.0 127.4,425.8 126.9,433.0 126.5,440.8 126.0,449.0 125.6,457.8 125.1,467.1 124.6,476.9 124.2,487.2 123.7,498.0 123.2,509.3 122.6,521.1 122.1,533.4 121.5,546.2 121.0,559.6 120.4,573.4 119.8,587.8 116.0,602.7 114.5,602.7" fill="#f2f1ec" fill-opacity="0.44" stroke="#f0efea" stroke-opacity="0.75" stroke-width="1.3"/>
<polygon points="225.0,0.0 232.0,0.0 233.3,24.4 233.9,47.9 234.4,70.6 235.0,92.4 235.6,113.4 236.1,133.6 236.6,153.0 237.1,171.5 237.6,189.2 238.1,206.1 238.5,222.2 239.0,237.4 239.5,251.7 239.9,265.3 240.3,278.0 240.8,289.9 241.2,300.9 241.7,311.2 242.2,320.6 242.7,329.1 243.3,336.8 244.0,343.7 244.8,349.8 245.7,355.0 246.9,359.4 248.3,363.0 250.1,365.8 252.0,367.7 253.6,368.8 254.0,369.0 256.5,368.4 259.0,369.2 261.5,369.8 264.0,367.2 266.5,367.2 269.0,367.8 271.5,368.3 274.0,369.7 276.5,370.0 279.0,369.8 280.0,369.0 280.0,379.0 279.0,378.2 276.5,378.0 274.0,378.3 271.5,379.7 269.0,380.2 266.5,380.8 264.0,380.8 261.5,378.2 259.0,378.8 256.5,379.6 254.0,379.0 253.6,379.2 252.0,380.3 250.1,382.2 248.3,385.0 246.9,388.6 245.7,393.0 244.8,398.2 244.0,404.3 243.3,411.2 242.7,418.9 242.2,427.4 241.7,436.8 241.2,447.1 240.8,458.1 240.3,470.0 239.9,482.7 239.5,496.3 239.0,510.6 238.5,525.8 238.1,541.9 237.6,558.8 237.1,576.5 236.6,595.0 236.1,614.4 235.6,634.6 235.0,655.6 234.4,677.4 233.9,700.1 233.3,723.6 226.5,748.0 225.0,748.0" fill="#f2f1ec" fill-opacity="0.44" stroke="#f0efea" stroke-opacity="0.75" stroke-width="1.3"/>
<polygon points="428.0,0.0 434.0,0.0 435.4,24.4 436.0,47.9 436.6,70.6 437.2,92.4 437.7,113.4 438.3,133.6 438.8,153.0 439.3,171.5 439.8,189.2 440.3,206.1 440.8,222.2 441.3,237.4 441.8,251.7 442.3,265.3 442.7,278.0 443.2,289.9 443.7,300.9 444.2,311.2 444.8,320.6 445.4,329.1 446.1,336.8 446.8,343.7 447.8,349.8 448.9,355.0 450.3,359.4 452.0,363.0 454.2,365.8 456.5,367.7 458.5,368.8 459.0,369.0 461.5,370.5 464.0,368.0 466.5,369.4 469.0,367.8 471.5,369.4 474.0,367.4 475.0,369.0 475.0,379.0 474.0,380.6 471.5,378.6 469.0,380.2 466.5,378.6 464.0,380.0 461.5,377.5 459.0,379.0 458.5,379.2 456.5,380.3 454.2,382.2 452.0,385.0 450.3,388.6 448.9,393.0 447.8,398.2 446.8,404.3 446.1,411.2 445.4,418.9 444.8,427.4 444.2,436.8 443.7,447.1 443.2,458.1 442.7,470.0 442.3,482.7 441.8,496.3 441.3,510.6 440.8,525.8 440.3,541.9 439.8,558.8 439.3,576.5 438.8,595.0 438.3,614.4 437.7,634.6 437.2,655.6 436.6,677.4 436.0,700.1 435.4,723.6 429.5,748.0 428.0,748.0" fill="#f2f1ec" fill-opacity="0.44" stroke="#f0efea" stroke-opacity="0.75" stroke-width="1.3"/>
<polygon points="346.4,253.0 346.4,227.6 349.2,227.6 351.9,255.3 353.8,238.7 357.5,225.8 361.2,215.6 364.9,214.7 367.6,234.0 369.5,216.5 371.3,216.5 372.2,70.6 376.9,70.6 382.4,179.6 383.3,187.0 386.1,187.0 388.9,214.7 390.7,244.0 392.6,246.0 395.3,222.0 399.0,219.3 400.9,220.2 403.6,253.0" fill="#f2f1ec" fill-opacity="0.40"/>
<polyline points="346.4,227.6 349.2,227.6 351.9,255.3 353.8,238.7 357.5,225.8 361.2,215.6 364.9,214.7 367.6,234.0 369.5,216.5 371.3,216.5 372.2,70.6 376.9,70.6 382.4,179.6 383.3,187.0 386.1,187.0 388.9,214.7 390.7,244.0 392.6,246.0 395.3,222.0 399.0,219.3 400.9,220.2" fill="none" stroke="#f0efea" stroke-opacity="0.7" stroke-width="1.2"/>
<polygon points="170.0,0.0 175.0,0.0 178.0,94.0 181.0,184.0 181.0,751.0 170.0,751.0" fill="#f2f1ec" fill-opacity="0.44" stroke="#f0efea" stroke-opacity="0.75" stroke-width="1.3"/>
<polygon points="280.0,0.0 286.0,0.0 289.0,94.0 292.0,184.0 295.0,254.0 298.0,324.0 301.0,374.0 298.0,424.0 295.0,494.0 292.0,564.0 289.0,654.0 286.0,751.0 280.0,751.0" fill="#f2f1ec" fill-opacity="0.44" stroke="#f0efea" stroke-opacity="0.75" stroke-width="1.3"/>
<polygon points="372.0,234.0 379.0,234.0 383.0,294.0 387.0,374.0 385.0,434.0 381.0,504.0 377.0,564.0 374.0,609.0 372.0,604.0" fill="#f2f1ec" fill-opacity="0.44" stroke="#f0efea" stroke-opacity="0.75" stroke-width="1.3"/>
<defs><linearGradient id="vg" x1="0" y1="0" x2="0" y2="1"><stop offset="0" stop-color="#f2f1ec" stop-opacity="0"/><stop offset="0.4" stop-color="#f2f1ec" stop-opacity="0.36"/><stop offset="0.6" stop-color="#f2f1ec" stop-opacity="0.36"/><stop offset="1" stop-color="#f2f1ec" stop-opacity="0"/></linearGradient></defs>
<rect x="181" y="269" width="43" height="215" fill="url(#vg)"/>
<polyline points="183.0,300.2 185.1,460.7 188.8,298.7 192.7,463.2 194.9,312.7 198.4,471.7 200.7,323.2 204.5,454.5 206.8,307.9 209.1,467.6 212.7,293.2 215.8,465.1 218.2,299.1 220.5,465.3 222.9,284.7" fill="none" stroke="#eeeadc" stroke-opacity="0.6" stroke-width="1.2"/>
<polyline points="184.0,331.8 189.1,401.4 192.7,348.1 196.0,415.4 200.8,338.8 203.9,399.5 207.2,325.7 211.8,421.3 215.3,318.1 218.4,415.4 221.7,332.4" fill="none" stroke="#eeeadc" stroke-opacity="0.4" stroke-width="1.1"/>
<rect x="291" y="264" width="158" height="225" fill="url(#vg)"/>
<polyline points="291.0,285.6 296.4,435.0 300.7,295.7 304.1,447.0 309.4,293.5 312.9,450.9 317.7,289.7 321.2,432.8 326.3,269.8 330.3,456.4 333.4,290.6 336.9,441.0 340.5,302.9 345.0,456.6 348.3,300.5 351.5,461.9 355.8,301.2 360.3,465.6 365.5,276.8 368.5,465.9 372.6,276.2 376.0,457.4 380.4,287.3 384.2,435.1 389.6,299.7 394.3,435.4 397.6,293.8 400.6,419.7 405.3,310.7 408.3,420.6 412.4,313.1 416.2,412.2 419.3,340.1 424.1,418.8 428.9,335.2 433.8,417.2 437.7,326.8 442.9,412.2 446.9,362.5 452.0,404.4 456.5,370.7 460.9,366.1" fill="none" stroke="#eeeadc" stroke-opacity="0.6" stroke-width="1.2"/>
<polyline points="293.0,346.4 299.5,393.2 305.2,337.6 310.9,403.7 315.7,353.3 319.4,397.7 323.0,345.0 328.0,415.9 333.6,341.4 338.9,391.8 343.2,324.4 347.6,400.3 351.7,329.9 357.9,400.9 362.7,355.2 367.2,400.7 371.3,339.1 377.2,392.0 383.4,337.5 388.6,412.9 392.5,341.4 398.5,394.3 404.2,357.3 408.5,418.1 413.4,337.1 417.5,402.7 422.9,352.4 427.3,380.0 433.8,359.6 437.5,400.1 443.6,353.1 449.2,371.8 453.7,387.4 457.2,380.7" fill="none" stroke="#eeeadc" stroke-opacity="0.45" stroke-width="1.1"/>
<polyline points="5.0,0.0 5.0,751.0" fill="none" stroke="#f0ecd8" stroke-opacity="0.7" stroke-width="1.2"/>
<polyline points="59.6,107.0 59.6,596.0" fill="none" stroke="#f0ecd8" stroke-opacity="0.7" stroke-width="1.2"/>
<polyline points="115.0,65.0 115.0,600.0" fill="none" stroke="#f0ecd8" stroke-opacity="0.7" stroke-width="1.2"/>
<polyline points="170.0,0.0 170.0,751.0" fill="none" stroke="#f0ecd8" stroke-opacity="0.7" stroke-width="1.2"/>
<polyline points="225.0,0.0 225.0,751.0" fill="none" stroke="#f0ecd8" stroke-opacity="0.7" stroke-width="1.2"/>
<polyline points="280.0,0.0 280.0,751.0" fill="none" stroke="#f0ecd8" stroke-opacity="0.7" stroke-width="1.2"/>
<polyline points="428.0,0.0 428.0,751.0" fill="none" stroke="#f0ecd8" stroke-opacity="0.7" stroke-width="1.2"/>
<polyline points="23.6,250.0 48.0,751.0" fill="none" stroke="#d8cfa8" stroke-opacity="0.5" stroke-width="1"/>
<polyline points="71.0,264.0 96.6,751.0" fill="none" stroke="#d8cfa8" stroke-opacity="0.5" stroke-width="1"/>
<polyline points="138.5,451.0 153.7,751.0" fill="none" stroke="#d8cfa8" stroke-opacity="0.5" stroke-width="1"/>
<polyline points="244.6,264.0 270.0,751.0" fill="none" stroke="#d8cfa8" stroke-opacity="0.5" stroke-width="1"/>
<polyline points="449.0,248.0 474.4,751.0" fill="none" stroke="#d8cfa8" stroke-opacity="0.5" stroke-width="1"/>
<defs><linearGradient id="ph" x1="0" x2="1"><stop offset="0" stop-color="#fff" stop-opacity="0"/><stop offset="0.6" stop-color="#fff" stop-opacity="0.32"/><stop offset="1" stop-color="#fff" stop-opacity="0.05"/></linearGradient></defs>
<rect x="327" y="0" width="11" height="751" fill="url(#ph)"/>
<rect x="0" y="-0.5" width="474" height="1.4" fill="#d98c8c"/>
<rect x="0" y="0" width="1.3" height="751" fill="#d8d4c4" fill-opacity="0.6"/>
<rect x="0" y="749.8" width="475" height="1.2" fill="#c8bf98" fill-opacity="0.7"/>
</svg>
</body></html>
